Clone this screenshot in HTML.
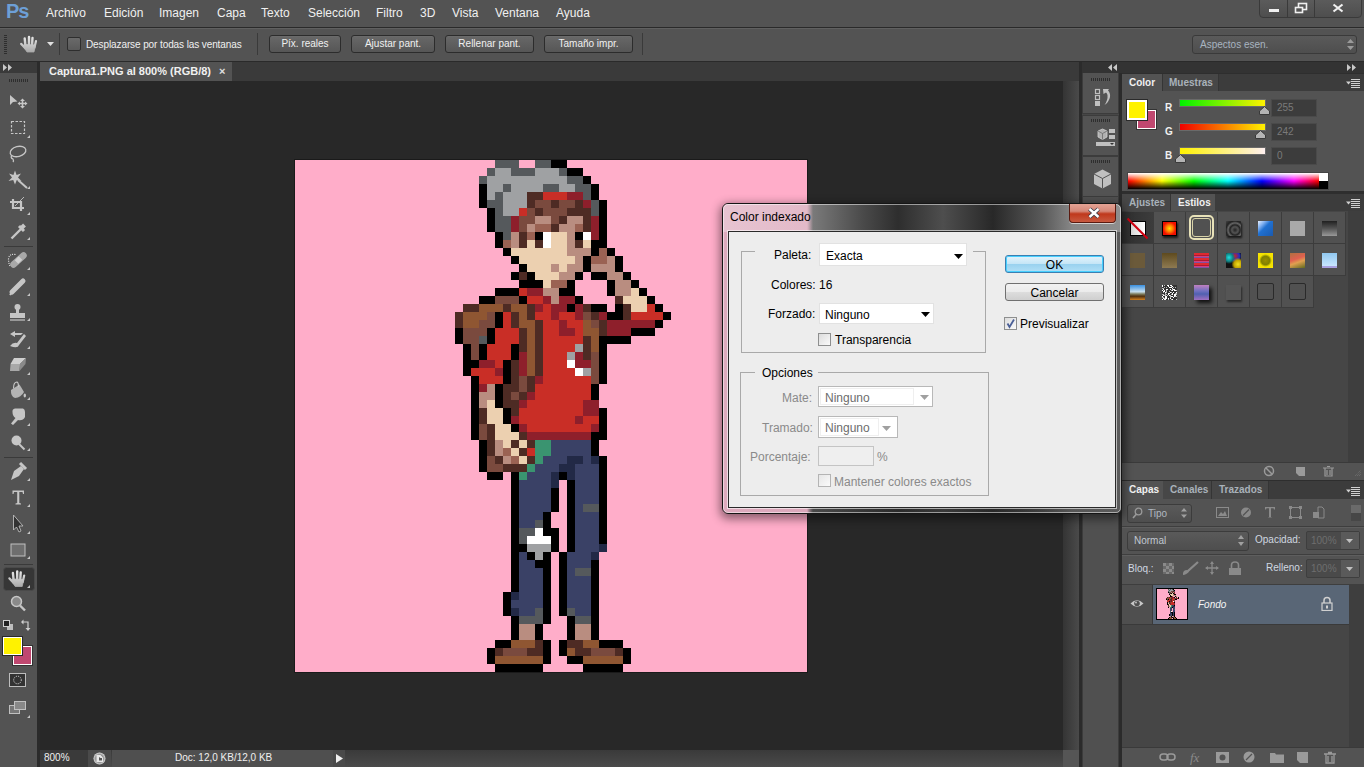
<!DOCTYPE html>
<html><head><meta charset="utf-8">
<style>
*{margin:0;padding:0;box-sizing:border-box}
html,body{width:1364px;height:767px;overflow:hidden;background:#535353;font-family:"Liberation Sans",sans-serif;color:#e8e8e8}
.a{position:absolute}
.t{position:absolute;white-space:nowrap;line-height:1}
.menu{font-size:12px;color:#f0f0f0;top:7px}
.dl{font-size:12px;color:#000}
.dis{color:#8a8a8a}
.dis2{color:#6d6d6d}
.btn{position:absolute;top:35px;height:18px;border:1px solid #2c2c2c;border-radius:3px;background:linear-gradient(#686868,#565656);font-size:10px;color:#f0f0f0;text-align:center;line-height:16px;box-shadow:inset 0 1px 0 #6a6a6a}
</style></head><body>
<!-- menu bar -->
<div class="a" style="left:0;top:0;width:1364px;height:27px;background:#535353"></div>
<div class="t" style="left:6px;top:1px;font-size:20px;font-weight:bold;color:#6d9fd6;letter-spacing:-1.2px">Ps</div>
<div class="t menu" style="left:46px">Archivo</div>
<div class="t menu" style="left:104px">Edición</div>
<div class="t menu" style="left:159px">Imagen</div>
<div class="t menu" style="left:217px">Capa</div>
<div class="t menu" style="left:261px">Texto</div>
<div class="t menu" style="left:308px">Selección</div>
<div class="t menu" style="left:376px">Filtro</div>
<div class="t menu" style="left:420px">3D</div>
<div class="t menu" style="left:452px">Vista</div>
<div class="t menu" style="left:495px">Ventana</div>
<div class="t menu" style="left:556px">Ayuda</div>
<!-- window controls -->
<div class="a" style="left:1259px;top:-2px;width:103px;height:20px;border:1px solid #3a3a3a;border-radius:0 0 4px 4px;background:linear-gradient(#5c5c5c,#4e4e4e)"></div>
<div class="a" style="left:1287px;top:0;width:1px;height:17px;background:#3a3a3a"></div>
<div class="a" style="left:1314px;top:0;width:1px;height:17px;background:#3a3a3a"></div>
<div class="a" style="left:1269px;top:9px;width:10px;height:3px;background:#f0f0f0"></div>
<svg class="a" style="left:1294px;top:2px" width="14" height="12"><rect x="4.5" y="1.5" width="8" height="6" fill="none" stroke="#f0f0f0" stroke-width="1.6"/><rect x="1" y="5" width="8" height="6" fill="#535353"/><rect x="1.5" y="5.5" width="7" height="5" fill="none" stroke="#f0f0f0" stroke-width="1.6"/></svg>
<svg class="a" style="left:1332px;top:3px" width="12" height="10"><path d="M1.5 1.5 L10.5 8.5 M10.5 1.5 L1.5 8.5" stroke="#f0f0f0" stroke-width="2.2"/></svg>
<div class="a" style="left:0;top:27px;width:1364px;height:1px;background:#2a2a2a"></div>
<div class="a" style="left:0;top:28px;width:1364px;height:1px;background:#606060"></div>
<!-- options bar -->
<div class="a" style="left:4px;top:35px;width:3px;height:20px;background:repeating-linear-gradient(#2e2e2e 0 1px,transparent 1px 2px)"></div>
<svg class="a" style="left:20px;top:35px" width="19" height="18"><g transform="translate(0.5 0.5)"><defs><linearGradient id="hg0" gradientUnits="userSpaceOnUse" x1="0" y1="1" x2="0" y2="17"><stop offset="0" stop-color="#e8e8e8"/><stop offset="1" stop-color="#a8a8a8"/></linearGradient></defs>
<g fill="url(#hg0)" stroke="url(#hg0)" stroke-linecap="round">
<path d="M4.2 3 L5 11" stroke-width="2.4"/><path d="M8.5 1.5 L8.5 10" stroke-width="2.4"/><path d="M12 2.5 L11.5 10.5" stroke-width="2.4"/><path d="M15.5 5.5 L14 12" stroke-width="2.2"/>
<path d="M0.8 8.5 L5 13" stroke-width="2.4"/>
<path d="M4 9 L15 9.5 L13.5 16.5 L6.5 16.5 L3.5 12 Z" stroke-width="0.8"/>
</g></g></svg>
<svg class="a" style="left:47px;top:42px" width="7" height="4"><path d="M0 0 L7 0 L3.5 4 Z" fill="#e0e0e0"/></svg>
<div class="a" style="left:59px;top:33px;width:1px;height:22px;background:#3a3a3a"></div>
<div class="a" style="left:67px;top:37px;width:14px;height:14px;border:1px solid #2e2e2e;border-radius:2px;background:linear-gradient(#6a6a6a,#5a5a5a)"></div>
<div class="t" style="left:86px;top:40px;font-size:10px;letter-spacing:-0.1px;color:#f0f0f0">Desplazarse por todas las ventanas</div>
<div class="a" style="left:257px;top:33px;width:1px;height:22px;background:#3a3a3a"></div>
<div class="btn" style="left:269px;width:72px">Píx. reales</div>
<div class="btn" style="left:351px;width:84px">Ajustar pant.</div>
<div class="btn" style="left:445px;width:89px">Rellenar pant.</div>
<div class="btn" style="left:544px;width:89px">Tamaño impr.</div>
<div class="a" style="left:642px;top:33px;width:1px;height:22px;background:#3a3a3a"></div>
<div class="a" style="left:1192px;top:35px;width:165px;height:19px;border:1px solid #3a3a3a;border-radius:3px;background:linear-gradient(#5a5a5a,#4e4e4e)"></div>
<div class="t" style="left:1200px;top:40px;font-size:10px;color:#a8b4c0">Aspectos esen.</div>
<svg class="a" style="left:1347px;top:39px" width="7" height="11"><path d="M0 4 L3.5 0 L7 4 Z M0 7 L3.5 11 L7 7 Z" fill="#9a9a9a"/></svg>
<div class="a" style="left:0;top:61px;width:1364px;height:1px;background:#2a2a2a"></div>

<!-- left toolbar -->
<div class="a" style="left:0;top:62px;width:37px;height:11px;background:#3a3a3a"></div>
<svg class="a" style="left:3px;top:64px" width="10" height="7"><path d="M0 0 L4 3.5 L0 7 Z M5 0 L9 3.5 L5 7 Z" fill="#c8c8c8"/></svg>
<div class="a" style="left:37px;top:62px;width:3px;height:705px;background:#2b2b2b"></div>
<div class="a" style="left:9px;top:79px;width:19px;height:3px;background:repeating-linear-gradient(90deg,#2e2e2e 0 1px,transparent 1px 2px)"></div>

<svg class="a" style="left:0;top:0" width="37" height="767" viewBox="0 0 37 767">
<g fill="#c6c6c6" stroke="none">
<!-- move -->
<path d="M10 95 L17.5 101.5 L13 102 L10 105 Z"/>
<path d="M22.5 98.5 L25 101 L23.3 101 L23.3 102.7 L25 102.7 L25 101.5 L27.5 103.5 L25 105.5 L25 104.3 L23.3 104.3 L23.3 106 L25 106 L22.5 108.5 L20 106 L21.7 106 L21.7 104.3 L20 104.3 L20 105.5 L17.5 103.5 L20 101.5 L20 102.7 L21.7 102.7 L21.7 101 L20 101 Z"/>
<!-- triangles -->
<path d="M30 135 L30 138 L27 138 Z M30 186 L30 189 L27 189 Z M30 212 L30 215 L27 215 Z M30 237 L30 240 L27 240 Z M30 267 L30 270 L27 270 Z M30 293 L30 296 L27 296 Z M30 318 L30 321 L27 321 Z M30 346 L30 349 L27 349 Z M30 372 L30 375 L27 375 Z M30 397 L30 400 L27 400 Z M30 423 L30 426 L27 426 Z M30 448 L30 451 L27 451 Z M30 478 L30 481 L27 481 Z M30 504 L30 507 L27 507 Z M30 531 L30 534 L27 534 Z M30 556 L30 559 L27 559 Z M30 585 L30 588 L27 588 Z M30 715 L30 718 L27 718 Z"/>
<!-- wand star -->
<path d="M15 170.5 L16.6 175 L21 173.5 L18 177.5 L21.5 181 L16.8 180 L15 184.5 L13.2 180 L8.5 181 L12 177.5 L9 173.5 L13.4 175 Z"/>
</g>
<g fill="none" stroke="#c6c6c6">
<rect x="11.5" y="121.5" width="13" height="12" stroke-dasharray="2.5 1.5" stroke-width="1.2"/>
<ellipse cx="18" cy="151.5" rx="8" ry="5" transform="rotate(-15 18 151.5)" stroke-width="1.3"/>
<path d="M12 155 Q10 158 13 159 Q14 161 13 162" stroke-width="1.3"/>
<path d="M18 180 L27 188" stroke-width="2"/>
<path d="M10 202 L21 202 L21 211 M13 199 L13 208 L24 208" stroke-width="2.2"/>
<path d="M15 206 L24 197" stroke-width="0.9"/>
<path d="M11.5 238.5 L21 229" stroke-width="2.4"/>
<path d="M19 226 L24 231" stroke-width="3"/>
<path d="M21.5 228 L24.5 225" stroke-width="4"/>
<path d="M13.5 264.5 L23.5 255.5" stroke-width="6.5" stroke-linecap="round" stroke="#a8a8a8"/>
<path d="M16.5 262 L20.5 258" stroke-width="5" stroke="#cfcfcf"/>
<path d="M15.5 254.5 Q9 253.5 8.5 259 Q8.5 263 10 266" stroke-width="1.2" stroke-dasharray="1 1.2" stroke="#e0e0e0"/>
<path d="M12 292 L23 281" stroke-width="5" stroke-linecap="round"/>
<path d="M10 295 L14 289" stroke-width="2"/>
<path d="M10 320 L25 320" stroke-width="1.2"/>
<path d="M10.5 356 L10.5 371" stroke-width="0"/>
</g>
<g fill="#c6c6c6">
<circle cx="17.5" cy="307" r="3"/><rect x="16" y="308" width="3" height="6"/><rect x="10" y="313" width="15" height="5"/>
<path d="M10 346 Q13 342 17 343 L24 334 L26 336 L19 345 Q18 349 10 346 Z"/>
<path d="M10 334 L15 331 L15 333 L23 333 L21 335 L15 335 L15 337 Z"/>
<path d="M14 358 L26 358 L20 364 L10.5 364 Z" fill="#cfcfcf"/><path d="M10.5 364 L20 364 L19.5 371 L10 371 Z" fill="#a8a8a8"/><path d="M20 364 L26 358 L25.5 364 L19.5 371 Z" fill="#8a8a8a"/>
<path d="M11 390 L19.5 384.5 L24 392 Q21 397.5 15 398 Q10.5 396.5 11 390 Z" fill="#b4b4b4"/>
<ellipse cx="24.8" cy="395.5" rx="1.2" ry="2" fill="#c6c6c6"/>
<path d="M13.5 388.5 Q13.5 382 17 382 Q18.5 382.5 18.5 387" fill="none" stroke="#c6c6c6" stroke-width="1.2"/>
<path d="M12.5 412 Q12 409 15 408.5 L23 408.5 Q25 409 25 412 L25 417 Q23 421 18 420 L13 425 L11 423.5 L15.5 418 Q12.5 416 12.5 412 Z"/>
<circle cx="16.5" cy="440.5" r="5"/>
<path d="M19 444 L24.5 449.5" stroke="#c6c6c6" stroke-width="2" fill="none"/>
<path d="M11 480 L14 471 L21 466 L24 469 L19 476 Z"/>
<path d="M20 463 L26 469" stroke="#c6c6c6" stroke-width="3" fill="none"/>
<path d="M12.5 490.5 L24 490.5 L24 494 L23 494 L22.5 492 L19.3 492 L19.3 503 L21 503.5 L21 504.5 L15.5 504.5 L15.5 503.5 L17.2 503 L17.2 492 L14 492 L13.5 494 L12.5 494 Z"/>
<rect x="11" y="544" width="14" height="12" fill="#6e6e6e" stroke="#c0c0c0" stroke-width="1"/>
</g>
<path d="M13.5 515 L13.5 530 L16.5 527 L19 532 L21 531 L19 526 L23 526 Z" fill="#333" stroke="#bbb" stroke-width="0.9"/>
<rect x="3.5" y="567.5" width="31" height="23" rx="3" fill="#363636" stroke="#4a4a4a"/>
<path d="M30 585 L30 588 L27 588 Z" fill="#c6c6c6"/>
<g transform="translate(8.7 570)"><defs><linearGradient id="hg570" gradientUnits="userSpaceOnUse" x1="0" y1="1" x2="0" y2="17"><stop offset="0" stop-color="#e8e8e8"/><stop offset="1" stop-color="#a8a8a8"/></linearGradient></defs>
<g fill="url(#hg570)" stroke="url(#hg570)" stroke-linecap="round">
<path d="M4.2 3 L5 11" stroke-width="2.4"/><path d="M8.5 1.5 L8.5 10" stroke-width="2.4"/><path d="M12 2.5 L11.5 10.5" stroke-width="2.4"/><path d="M15.5 5.5 L14 12" stroke-width="2.2"/>
<path d="M0.8 8.5 L5 13" stroke-width="2.4"/>
<path d="M4 9 L15 9.5 L13.5 16.5 L6.5 16.5 L3.5 12 Z" stroke-width="0.8"/>
</g></g>
<circle cx="16.5" cy="601.5" r="5" fill="#8a8a8a" stroke="#c6c6c6" stroke-width="1.5"/>
<path d="M20 605.5 L25 610.5" stroke="#c6c6c6" stroke-width="2.4"/>
<rect x="7" y="624" width="6" height="6" fill="#bdbdbd"/><rect x="3.5" y="620.5" width="6" height="6" fill="#222" stroke="#cfcfcf"/>
<path d="M23 622 L28 622 L28 628" fill="none" stroke="#cfcfcf" stroke-width="1.2"/>
<path d="M21 622 L23.5 619.5 L23.5 624.5 Z M28 631 L25.5 628 L30.5 628 Z" fill="#cfcfcf"/>
<rect x="13.5" y="646.5" width="18" height="18" fill="#c04870" stroke="#fff"/>
<rect x="12.5" y="645.5" width="20" height="20" fill="none" stroke="#333"/>
<rect x="3.5" y="637.5" width="18" height="17" fill="#fff200" stroke="#fff"/>
<rect x="2.5" y="636.5" width="20" height="19" fill="none" stroke="#2a2a2a"/>
<rect x="9.5" y="673.5" width="16" height="13" fill="#333" stroke="#bdbdbd"/>
<circle cx="17.5" cy="680" r="3.8" fill="none" stroke="#e0e0e0" stroke-dasharray="1 1"/>
<rect x="9.5" y="705.5" width="10" height="8" fill="#777" stroke="#c0c0c0"/>
<rect x="14.5" y="701.5" width="11" height="8" fill="#888" stroke="#c0c0c0"/>
</svg>
<div class="a" style="left:4px;top:246px;width:29px;height:1px;background:#3a3a3a"></div>
<div class="a" style="left:4px;top:457px;width:29px;height:1px;background:#3a3a3a"></div>
<div class="a" style="left:4px;top:564px;width:29px;height:1px;background:#3a3a3a"></div>
<!-- doc tab strip -->
<div class="a" style="left:40px;top:62px;width:1039px;height:19px;background:#3a3a3a"></div>
<div class="a" style="left:40px;top:62px;width:192px;height:19px;background:#535353"></div>
<div class="t" style="left:49px;top:66px;font-size:11px;font-weight:bold;color:#f0f0f0">Captura1.PNG al 800% (RGB/8)</div>
<div class="t" style="left:219px;top:66px;font-size:11px;font-weight:bold;color:#e0e0e0">×</div>

<!-- canvas area -->
<div class="a" style="left:40px;top:81px;width:1023px;height:669px;background:#282828"></div>
<div class="a" style="left:294px;top:159px;width:514px;height:514px;background:#1a1a1a"></div>
<svg class="a" style="left:295px;top:160px" width="512" height="512" viewBox="0 0 64 64" shape-rendering="crispEdges"><rect width="64" height="64" fill="#FFADC9"/><g id="art"><rect x="25" y="0" width="3" height="1" fill="#55595C"/><rect x="30" y="0" width="2" height="1" fill="#55595C"/><rect x="32" y="0" width="2" height="1" fill="#000000"/><rect x="24" y="1" width="1" height="1" fill="#55595C"/><rect x="25" y="1" width="2" height="1" fill="#9FA1A3"/><rect x="27" y="1" width="3" height="1" fill="#55595C"/><rect x="30" y="1" width="3" height="1" fill="#9FA1A3"/><rect x="33" y="1" width="1" height="1" fill="#55595C"/><rect x="34" y="1" width="2" height="1" fill="#000000"/><rect x="23" y="2" width="1" height="1" fill="#55595C"/><rect x="24" y="2" width="10" height="1" fill="#9FA1A3"/><rect x="34" y="2" width="2" height="1" fill="#55595C"/><rect x="36" y="2" width="1" height="1" fill="#000000"/><rect x="23" y="3" width="1" height="1" fill="#000000"/><rect x="24" y="3" width="2" height="1" fill="#9FA1A3"/><rect x="26" y="3" width="1" height="1" fill="#55595C"/><rect x="27" y="3" width="4" height="1" fill="#9FA1A3"/><rect x="31" y="3" width="2" height="1" fill="#55595C"/><rect x="33" y="3" width="2" height="1" fill="#9FA1A3"/><rect x="35" y="3" width="2" height="1" fill="#55595C"/><rect x="37" y="3" width="1" height="1" fill="#000000"/><rect x="23" y="4" width="1" height="1" fill="#000000"/><rect x="24" y="4" width="1" height="1" fill="#9FA1A3"/><rect x="25" y="4" width="1" height="1" fill="#55595C"/><rect x="26" y="4" width="3" height="1" fill="#9FA1A3"/><rect x="29" y="4" width="2" height="1" fill="#4E2B24"/><rect x="31" y="4" width="3" height="1" fill="#C92E26"/><rect x="34" y="4" width="2" height="1" fill="#8E1F2B"/><rect x="36" y="4" width="1" height="1" fill="#55595C"/><rect x="37" y="4" width="1" height="1" fill="#000000"/><rect x="23" y="5" width="1" height="1" fill="#000000"/><rect x="24" y="5" width="2" height="1" fill="#55595C"/><rect x="26" y="5" width="3" height="1" fill="#9FA1A3"/><rect x="29" y="5" width="1" height="1" fill="#4E2B24"/><rect x="30" y="5" width="2" height="1" fill="#7A4A3E"/><rect x="32" y="5" width="1" height="1" fill="#4E2B24"/><rect x="33" y="5" width="2" height="1" fill="#7A4A3E"/><rect x="35" y="5" width="1" height="1" fill="#4E2B24"/><rect x="36" y="5" width="1" height="1" fill="#8E1F2B"/><rect x="37" y="5" width="1" height="1" fill="#55595C"/><rect x="38" y="5" width="1" height="1" fill="#000000"/><rect x="24" y="6" width="1" height="1" fill="#000000"/><rect x="25" y="6" width="1" height="1" fill="#55595C"/><rect x="26" y="6" width="2" height="1" fill="#9FA1A3"/><rect x="28" y="6" width="1" height="1" fill="#C92E26"/><rect x="29" y="6" width="1" height="1" fill="#7A4A3E"/><rect x="30" y="6" width="1" height="1" fill="#4E2B24"/><rect x="31" y="6" width="3" height="1" fill="#7A4A3E"/><rect x="34" y="6" width="3" height="1" fill="#4E2B24"/><rect x="37" y="6" width="1" height="1" fill="#55595C"/><rect x="38" y="6" width="1" height="1" fill="#000000"/><rect x="24" y="7" width="1" height="1" fill="#000000"/><rect x="25" y="7" width="2" height="1" fill="#55595C"/><rect x="27" y="7" width="1" height="1" fill="#8E1F2B"/><rect x="28" y="7" width="2" height="1" fill="#7A4A3E"/><rect x="30" y="7" width="2" height="1" fill="#B98D80"/><rect x="32" y="7" width="1" height="1" fill="#7A4A3E"/><rect x="33" y="7" width="1" height="1" fill="#4E2B24"/><rect x="34" y="7" width="2" height="1" fill="#B98D80"/><rect x="36" y="7" width="1" height="1" fill="#4E2B24"/><rect x="37" y="7" width="1" height="1" fill="#8E1F2B"/><rect x="38" y="7" width="1" height="1" fill="#000000"/><rect x="24" y="8" width="1" height="1" fill="#000000"/><rect x="25" y="8" width="2" height="1" fill="#55595C"/><rect x="27" y="8" width="1" height="1" fill="#8E1F2B"/><rect x="28" y="8" width="1" height="1" fill="#7A4A3E"/><rect x="29" y="8" width="1" height="1" fill="#B98D80"/><rect x="30" y="8" width="2" height="1" fill="#9A6253"/><rect x="32" y="8" width="1" height="1" fill="#4E2B24"/><rect x="33" y="8" width="2" height="1" fill="#B98D80"/><rect x="35" y="8" width="1" height="1" fill="#9A6253"/><rect x="36" y="8" width="1" height="1" fill="#4E2B24"/><rect x="37" y="8" width="1" height="1" fill="#8E1F2B"/><rect x="38" y="8" width="1" height="1" fill="#000000"/><rect x="25" y="9" width="1" height="1" fill="#000000"/><rect x="26" y="9" width="1" height="1" fill="#55595C"/><rect x="27" y="9" width="1" height="1" fill="#B98D80"/><rect x="28" y="9" width="1" height="1" fill="#4E2B24"/><rect x="29" y="9" width="1" height="1" fill="#9A6253"/><rect x="30" y="9" width="1" height="1" fill="#000000"/><rect x="31" y="9" width="1" height="1" fill="#FFFFFF"/><rect x="32" y="9" width="2" height="1" fill="#ECD0B0"/><rect x="34" y="9" width="1" height="1" fill="#B98D80"/><rect x="35" y="9" width="1" height="1" fill="#000000"/><rect x="36" y="9" width="1" height="1" fill="#FFFFFF"/><rect x="37" y="9" width="1" height="1" fill="#8E1F2B"/><rect x="38" y="9" width="1" height="1" fill="#000000"/><rect x="25" y="10" width="1" height="1" fill="#000000"/><rect x="26" y="10" width="1" height="1" fill="#9A6253"/><rect x="27" y="10" width="1" height="1" fill="#B98D80"/><rect x="28" y="10" width="1" height="1" fill="#4E2B24"/><rect x="29" y="10" width="1" height="1" fill="#ECD0B0"/><rect x="30" y="10" width="1" height="1" fill="#4E2B24"/><rect x="31" y="10" width="1" height="1" fill="#FFFFFF"/><rect x="32" y="10" width="2" height="1" fill="#ECD0B0"/><rect x="34" y="10" width="1" height="1" fill="#B98D80"/><rect x="35" y="10" width="1" height="1" fill="#4E2B24"/><rect x="36" y="10" width="1" height="1" fill="#ECD0B0"/><rect x="37" y="10" width="2" height="1" fill="#000000"/><rect x="26" y="11" width="1" height="1" fill="#000000"/><rect x="27" y="11" width="7" height="1" fill="#ECD0B0"/><rect x="34" y="11" width="3" height="1" fill="#B98D80"/><rect x="37" y="11" width="1" height="1" fill="#000000"/><rect x="38" y="11" width="1" height="1" fill="#9A6253"/><rect x="39" y="11" width="1" height="1" fill="#000000"/><rect x="27" y="12" width="1" height="1" fill="#000000"/><rect x="28" y="12" width="7" height="1" fill="#ECD0B0"/><rect x="35" y="12" width="1" height="1" fill="#B98D80"/><rect x="36" y="12" width="1" height="1" fill="#000000"/><rect x="37" y="12" width="2" height="1" fill="#9A6253"/><rect x="39" y="12" width="1" height="1" fill="#B98D80"/><rect x="40" y="12" width="1" height="1" fill="#000000"/><rect x="28" y="13" width="1" height="1" fill="#000000"/><rect x="29" y="13" width="3" height="1" fill="#ECD0B0"/><rect x="32" y="13" width="1" height="1" fill="#B98D80"/><rect x="33" y="13" width="1" height="1" fill="#ECD0B0"/><rect x="34" y="13" width="2" height="1" fill="#B98D80"/><rect x="36" y="13" width="1" height="1" fill="#000000"/><rect x="37" y="13" width="3" height="1" fill="#B98D80"/><rect x="40" y="13" width="1" height="1" fill="#000000"/><rect x="27" y="14" width="1" height="1" fill="#000000"/><rect x="28" y="14" width="1" height="1" fill="#4E2B24"/><rect x="29" y="14" width="1" height="1" fill="#000000"/><rect x="30" y="14" width="3" height="1" fill="#ECD0B0"/><rect x="33" y="14" width="2" height="1" fill="#B98D80"/><rect x="35" y="14" width="1" height="1" fill="#000000"/><rect x="37" y="14" width="2" height="1" fill="#000000"/><rect x="39" y="14" width="2" height="1" fill="#B98D80"/><rect x="41" y="14" width="1" height="1" fill="#000000"/><rect x="28" y="15" width="3" height="1" fill="#000000"/><rect x="31" y="15" width="1" height="1" fill="#ECD0B0"/><rect x="32" y="15" width="2" height="1" fill="#9A6253"/><rect x="34" y="15" width="1" height="1" fill="#000000"/><rect x="39" y="15" width="1" height="1" fill="#000000"/><rect x="40" y="15" width="2" height="1" fill="#B98D80"/><rect x="42" y="15" width="1" height="1" fill="#000000"/><rect x="25" y="16" width="3" height="1" fill="#000000"/><rect x="28" y="16" width="1" height="1" fill="#C92E26"/><rect x="29" y="16" width="2" height="1" fill="#8E1F2B"/><rect x="31" y="16" width="2" height="1" fill="#B98D80"/><rect x="33" y="16" width="2" height="1" fill="#000000"/><rect x="39" y="16" width="1" height="1" fill="#000000"/><rect x="40" y="16" width="2" height="1" fill="#B98D80"/><rect x="42" y="16" width="1" height="1" fill="#ECD0B0"/><rect x="43" y="16" width="1" height="1" fill="#000000"/><rect x="23" y="17" width="2" height="1" fill="#000000"/><rect x="25" y="17" width="3" height="1" fill="#7A4A3E"/><rect x="28" y="17" width="1" height="1" fill="#000000"/><rect x="29" y="17" width="2" height="1" fill="#C92E26"/><rect x="31" y="17" width="1" height="1" fill="#8E1F2B"/><rect x="32" y="17" width="1" height="1" fill="#B98D80"/><rect x="33" y="17" width="2" height="1" fill="#8E1F2B"/><rect x="35" y="17" width="1" height="1" fill="#000000"/><rect x="40" y="17" width="1" height="1" fill="#4E2B24"/><rect x="41" y="17" width="3" height="1" fill="#ECD0B0"/><rect x="44" y="17" width="1" height="1" fill="#000000"/><rect x="21" y="18" width="2" height="1" fill="#4E2B24"/><rect x="23" y="18" width="3" height="1" fill="#8F5632"/><rect x="26" y="18" width="1" height="1" fill="#4E2B24"/><rect x="27" y="18" width="2" height="1" fill="#8F5632"/><rect x="29" y="18" width="1" height="1" fill="#4E2B24"/><rect x="30" y="18" width="1" height="1" fill="#8E1F2B"/><rect x="31" y="18" width="1" height="1" fill="#C92E26"/><rect x="32" y="18" width="2" height="1" fill="#8E1F2B"/><rect x="34" y="18" width="1" height="1" fill="#000000"/><rect x="35" y="18" width="1" height="1" fill="#8E1F2B"/><rect x="36" y="18" width="1" height="1" fill="#4E2B24"/><rect x="37" y="18" width="2" height="1" fill="#000000"/><rect x="40" y="18" width="1" height="1" fill="#000000"/><rect x="41" y="18" width="1" height="1" fill="#4E2B24"/><rect x="42" y="18" width="2" height="1" fill="#ECD0B0"/><rect x="44" y="18" width="1" height="1" fill="#C92E26"/><rect x="45" y="18" width="1" height="1" fill="#000000"/><rect x="20" y="19" width="1" height="1" fill="#4E2B24"/><rect x="21" y="19" width="3" height="1" fill="#8F5632"/><rect x="24" y="19" width="1" height="1" fill="#7A4A3E"/><rect x="25" y="19" width="1" height="1" fill="#000000"/><rect x="26" y="19" width="1" height="1" fill="#C92E26"/><rect x="27" y="19" width="1" height="1" fill="#4E2B24"/><rect x="28" y="19" width="1" height="1" fill="#8F5632"/><rect x="29" y="19" width="1" height="1" fill="#4E2B24"/><rect x="30" y="19" width="2" height="1" fill="#C92E26"/><rect x="32" y="19" width="1" height="1" fill="#8E1F2B"/><rect x="33" y="19" width="2" height="1" fill="#C92E26"/><rect x="35" y="19" width="1" height="1" fill="#8E1F2B"/><rect x="36" y="19" width="1" height="1" fill="#7A4A3E"/><rect x="37" y="19" width="1" height="1" fill="#4E2B24"/><rect x="38" y="19" width="1" height="1" fill="#8E1F2B"/><rect x="39" y="19" width="2" height="1" fill="#000000"/><rect x="41" y="19" width="1" height="1" fill="#4E2B24"/><rect x="42" y="19" width="4" height="1" fill="#C92E26"/><rect x="46" y="19" width="1" height="1" fill="#000000"/><rect x="20" y="20" width="1" height="1" fill="#4E2B24"/><rect x="21" y="20" width="2" height="1" fill="#8F5632"/><rect x="23" y="20" width="2" height="1" fill="#7A4A3E"/><rect x="25" y="20" width="1" height="1" fill="#000000"/><rect x="26" y="20" width="1" height="1" fill="#C92E26"/><rect x="27" y="20" width="1" height="1" fill="#4E2B24"/><rect x="28" y="20" width="2" height="1" fill="#8F5632"/><rect x="30" y="20" width="1" height="1" fill="#4E2B24"/><rect x="31" y="20" width="2" height="1" fill="#C92E26"/><rect x="33" y="20" width="1" height="1" fill="#8E1F2B"/><rect x="34" y="20" width="2" height="1" fill="#C92E26"/><rect x="36" y="20" width="1" height="1" fill="#8F5632"/><rect x="37" y="20" width="1" height="1" fill="#7A4A3E"/><rect x="38" y="20" width="1" height="1" fill="#4E2B24"/><rect x="39" y="20" width="6" height="1" fill="#8E1F2B"/><rect x="45" y="20" width="1" height="1" fill="#000000"/><rect x="20" y="21" width="1" height="1" fill="#000000"/><rect x="21" y="21" width="3" height="1" fill="#7A4A3E"/><rect x="24" y="21" width="1" height="1" fill="#000000"/><rect x="25" y="21" width="3" height="1" fill="#C92E26"/><rect x="28" y="21" width="1" height="1" fill="#4E2B24"/><rect x="29" y="21" width="1" height="1" fill="#8F5632"/><rect x="30" y="21" width="1" height="1" fill="#4E2B24"/><rect x="31" y="21" width="2" height="1" fill="#C92E26"/><rect x="33" y="21" width="2" height="1" fill="#8E1F2B"/><rect x="35" y="21" width="1" height="1" fill="#C92E26"/><rect x="36" y="21" width="2" height="1" fill="#8F5632"/><rect x="38" y="21" width="1" height="1" fill="#4E2B24"/><rect x="39" y="21" width="3" height="1" fill="#8E1F2B"/><rect x="42" y="21" width="3" height="1" fill="#000000"/><rect x="20" y="22" width="1" height="1" fill="#000000"/><rect x="21" y="22" width="2" height="1" fill="#7A4A3E"/><rect x="23" y="22" width="1" height="1" fill="#55595C"/><rect x="24" y="22" width="1" height="1" fill="#000000"/><rect x="25" y="22" width="3" height="1" fill="#C92E26"/><rect x="28" y="22" width="1" height="1" fill="#4E2B24"/><rect x="29" y="22" width="1" height="1" fill="#8F5632"/><rect x="30" y="22" width="1" height="1" fill="#4E2B24"/><rect x="31" y="22" width="5" height="1" fill="#C92E26"/><rect x="36" y="22" width="1" height="1" fill="#4E2B24"/><rect x="37" y="22" width="1" height="1" fill="#8F5632"/><rect x="38" y="22" width="4" height="1" fill="#000000"/><rect x="21" y="23" width="1" height="1" fill="#000000"/><rect x="22" y="23" width="1" height="1" fill="#7A4A3E"/><rect x="23" y="23" width="1" height="1" fill="#000000"/><rect x="24" y="23" width="3" height="1" fill="#C92E26"/><rect x="27" y="23" width="1" height="1" fill="#000000"/><rect x="28" y="23" width="1" height="1" fill="#4E2B24"/><rect x="29" y="23" width="1" height="1" fill="#8F5632"/><rect x="30" y="23" width="1" height="1" fill="#4E2B24"/><rect x="31" y="23" width="4" height="1" fill="#C92E26"/><rect x="35" y="23" width="1" height="1" fill="#9FA1A3"/><rect x="36" y="23" width="1" height="1" fill="#4E2B24"/><rect x="37" y="23" width="1" height="1" fill="#8F5632"/><rect x="38" y="23" width="1" height="1" fill="#000000"/><rect x="21" y="24" width="1" height="1" fill="#000000"/><rect x="22" y="24" width="1" height="1" fill="#7A4A3E"/><rect x="23" y="24" width="1" height="1" fill="#000000"/><rect x="24" y="24" width="3" height="1" fill="#C92E26"/><rect x="27" y="24" width="1" height="1" fill="#000000"/><rect x="28" y="24" width="1" height="1" fill="#8E1F2B"/><rect x="29" y="24" width="1" height="1" fill="#8F5632"/><rect x="30" y="24" width="1" height="1" fill="#4E2B24"/><rect x="31" y="24" width="3" height="1" fill="#C92E26"/><rect x="34" y="24" width="1" height="1" fill="#9FA1A3"/><rect x="35" y="24" width="1" height="1" fill="#8E1F2B"/><rect x="36" y="24" width="1" height="1" fill="#4E2B24"/><rect x="37" y="24" width="1" height="1" fill="#7A4A3E"/><rect x="38" y="24" width="1" height="1" fill="#000000"/><rect x="21" y="25" width="2" height="1" fill="#000000"/><rect x="23" y="25" width="2" height="1" fill="#8E1F2B"/><rect x="25" y="25" width="1" height="1" fill="#C92E26"/><rect x="26" y="25" width="1" height="1" fill="#000000"/><rect x="27" y="25" width="1" height="1" fill="#4E2B24"/><rect x="28" y="25" width="1" height="1" fill="#8E1F2B"/><rect x="29" y="25" width="1" height="1" fill="#8F5632"/><rect x="30" y="25" width="1" height="1" fill="#4E2B24"/><rect x="31" y="25" width="3" height="1" fill="#C92E26"/><rect x="34" y="25" width="1" height="1" fill="#FFFFFF"/><rect x="35" y="25" width="2" height="1" fill="#8E1F2B"/><rect x="37" y="25" width="1" height="1" fill="#7A4A3E"/><rect x="38" y="25" width="1" height="1" fill="#000000"/><rect x="21" y="26" width="1" height="1" fill="#000000"/><rect x="22" y="26" width="3" height="1" fill="#C92E26"/><rect x="25" y="26" width="1" height="1" fill="#8E1F2B"/><rect x="26" y="26" width="1" height="1" fill="#000000"/><rect x="27" y="26" width="1" height="1" fill="#4E2B24"/><rect x="28" y="26" width="1" height="1" fill="#8E1F2B"/><rect x="29" y="26" width="1" height="1" fill="#8F5632"/><rect x="30" y="26" width="1" height="1" fill="#4E2B24"/><rect x="31" y="26" width="4" height="1" fill="#C92E26"/><rect x="35" y="26" width="1" height="1" fill="#FFFFFF"/><rect x="36" y="26" width="1" height="1" fill="#9FA1A3"/><rect x="37" y="26" width="1" height="1" fill="#7A4A3E"/><rect x="38" y="26" width="1" height="1" fill="#000000"/><rect x="22" y="27" width="1" height="1" fill="#000000"/><rect x="23" y="27" width="3" height="1" fill="#C92E26"/><rect x="26" y="27" width="1" height="1" fill="#000000"/><rect x="27" y="27" width="1" height="1" fill="#4E2B24"/><rect x="28" y="27" width="1" height="1" fill="#7A4A3E"/><rect x="29" y="27" width="1" height="1" fill="#4E2B24"/><rect x="30" y="27" width="1" height="1" fill="#8E1F2B"/><rect x="31" y="27" width="6" height="1" fill="#C92E26"/><rect x="37" y="27" width="1" height="1" fill="#7A4A3E"/><rect x="38" y="27" width="1" height="1" fill="#000000"/><rect x="22" y="28" width="1" height="1" fill="#000000"/><rect x="23" y="28" width="1" height="1" fill="#8E1F2B"/><rect x="24" y="28" width="1" height="1" fill="#B98D80"/><rect x="25" y="28" width="1" height="1" fill="#000000"/><rect x="26" y="28" width="2" height="1" fill="#4E2B24"/><rect x="28" y="28" width="1" height="1" fill="#7A4A3E"/><rect x="29" y="28" width="1" height="1" fill="#4E2B24"/><rect x="30" y="28" width="7" height="1" fill="#C92E26"/><rect x="37" y="28" width="1" height="1" fill="#000000"/><rect x="22" y="29" width="1" height="1" fill="#000000"/><rect x="23" y="29" width="2" height="1" fill="#B98D80"/><rect x="25" y="29" width="1" height="1" fill="#000000"/><rect x="26" y="29" width="1" height="1" fill="#4E2B24"/><rect x="27" y="29" width="1" height="1" fill="#7A4A3E"/><rect x="28" y="29" width="1" height="1" fill="#4E2B24"/><rect x="29" y="29" width="1" height="1" fill="#8E1F2B"/><rect x="30" y="29" width="7" height="1" fill="#C92E26"/><rect x="37" y="29" width="1" height="1" fill="#000000"/><rect x="22" y="30" width="1" height="1" fill="#000000"/><rect x="23" y="30" width="1" height="1" fill="#B98D80"/><rect x="24" y="30" width="1" height="1" fill="#ECD0B0"/><rect x="25" y="30" width="1" height="1" fill="#000000"/><rect x="26" y="30" width="2" height="1" fill="#4E2B24"/><rect x="28" y="30" width="1" height="1" fill="#8E1F2B"/><rect x="29" y="30" width="7" height="1" fill="#C92E26"/><rect x="36" y="30" width="2" height="1" fill="#8E1F2B"/><rect x="22" y="31" width="1" height="1" fill="#000000"/><rect x="23" y="31" width="1" height="1" fill="#4E2B24"/><rect x="24" y="31" width="2" height="1" fill="#ECD0B0"/><rect x="26" y="31" width="1" height="1" fill="#000000"/><rect x="27" y="31" width="1" height="1" fill="#4E2B24"/><rect x="28" y="31" width="8" height="1" fill="#C92E26"/><rect x="36" y="31" width="2" height="1" fill="#8E1F2B"/><rect x="38" y="31" width="1" height="1" fill="#000000"/><rect x="22" y="32" width="1" height="1" fill="#000000"/><rect x="23" y="32" width="1" height="1" fill="#4E2B24"/><rect x="24" y="32" width="2" height="1" fill="#ECD0B0"/><rect x="26" y="32" width="1" height="1" fill="#000000"/><rect x="27" y="32" width="1" height="1" fill="#8E1F2B"/><rect x="28" y="32" width="7" height="1" fill="#C92E26"/><rect x="35" y="32" width="1" height="1" fill="#8E1F2B"/><rect x="36" y="32" width="2" height="1" fill="#C92E26"/><rect x="38" y="32" width="1" height="1" fill="#000000"/><rect x="22" y="33" width="1" height="1" fill="#000000"/><rect x="23" y="33" width="1" height="1" fill="#7A4A3E"/><rect x="24" y="33" width="1" height="1" fill="#4E2B24"/><rect x="25" y="33" width="2" height="1" fill="#ECD0B0"/><rect x="27" y="33" width="1" height="1" fill="#000000"/><rect x="28" y="33" width="1" height="1" fill="#8E1F2B"/><rect x="29" y="33" width="8" height="1" fill="#C92E26"/><rect x="37" y="33" width="1" height="1" fill="#8E1F2B"/><rect x="38" y="33" width="1" height="1" fill="#000000"/><rect x="22" y="34" width="1" height="1" fill="#000000"/><rect x="23" y="34" width="1" height="1" fill="#7A4A3E"/><rect x="24" y="34" width="1" height="1" fill="#4E2B24"/><rect x="25" y="34" width="3" height="1" fill="#ECD0B0"/><rect x="28" y="34" width="1" height="1" fill="#4E2B24"/><rect x="29" y="34" width="8" height="1" fill="#8E1F2B"/><rect x="37" y="34" width="2" height="1" fill="#000000"/><rect x="23" y="35" width="1" height="1" fill="#000000"/><rect x="24" y="35" width="1" height="1" fill="#4E2B24"/><rect x="25" y="35" width="1" height="1" fill="#B98D80"/><rect x="26" y="35" width="1" height="1" fill="#ECD0B0"/><rect x="27" y="35" width="1" height="1" fill="#4E2B24"/><rect x="28" y="35" width="1" height="1" fill="#ECD0B0"/><rect x="29" y="35" width="1" height="1" fill="#4E2B24"/><rect x="30" y="35" width="2" height="1" fill="#3A9470"/><rect x="32" y="35" width="5" height="1" fill="#3A4166"/><rect x="37" y="35" width="1" height="1" fill="#000000"/><rect x="23" y="36" width="1" height="1" fill="#000000"/><rect x="24" y="36" width="1" height="1" fill="#4E2B24"/><rect x="25" y="36" width="1" height="1" fill="#B98D80"/><rect x="26" y="36" width="1" height="1" fill="#9A6253"/><rect x="27" y="36" width="1" height="1" fill="#ECD0B0"/><rect x="28" y="36" width="1" height="1" fill="#4E2B24"/><rect x="29" y="36" width="1" height="1" fill="#C92E26"/><rect x="30" y="36" width="2" height="1" fill="#3A9470"/><rect x="32" y="36" width="5" height="1" fill="#3A4166"/><rect x="37" y="36" width="1" height="1" fill="#000000"/><rect x="23" y="37" width="1" height="1" fill="#000000"/><rect x="24" y="37" width="1" height="1" fill="#7A4A3E"/><rect x="25" y="37" width="1" height="1" fill="#4E2B24"/><rect x="26" y="37" width="1" height="1" fill="#B98D80"/><rect x="27" y="37" width="1" height="1" fill="#9A6253"/><rect x="28" y="37" width="1" height="1" fill="#ECD0B0"/><rect x="29" y="37" width="1" height="1" fill="#4E2B24"/><rect x="30" y="37" width="1" height="1" fill="#3A9470"/><rect x="31" y="37" width="3" height="1" fill="#3A4166"/><rect x="34" y="37" width="2" height="1" fill="#222946"/><rect x="36" y="37" width="1" height="1" fill="#3A4166"/><rect x="37" y="37" width="1" height="1" fill="#222946"/><rect x="38" y="37" width="1" height="1" fill="#000000"/><rect x="23" y="38" width="1" height="1" fill="#000000"/><rect x="24" y="38" width="2" height="1" fill="#7A4A3E"/><rect x="26" y="38" width="3" height="1" fill="#4E2B24"/><rect x="29" y="38" width="1" height="1" fill="#3A9470"/><rect x="30" y="38" width="3" height="1" fill="#3A4166"/><rect x="33" y="38" width="2" height="1" fill="#222946"/><rect x="35" y="38" width="3" height="1" fill="#3A4166"/><rect x="38" y="38" width="1" height="1" fill="#000000"/><rect x="24" y="39" width="2" height="1" fill="#000000"/><rect x="27" y="39" width="1" height="1" fill="#000000"/><rect x="28" y="39" width="1" height="1" fill="#3A9470"/><rect x="29" y="39" width="3" height="1" fill="#3A4166"/><rect x="32" y="39" width="1" height="1" fill="#222946"/><rect x="33" y="39" width="1" height="1" fill="#000000"/><rect x="34" y="39" width="1" height="1" fill="#222946"/><rect x="35" y="39" width="3" height="1" fill="#3A4166"/><rect x="38" y="39" width="1" height="1" fill="#000000"/><rect x="27" y="40" width="1" height="1" fill="#000000"/><rect x="28" y="40" width="4" height="1" fill="#3A4166"/><rect x="32" y="40" width="1" height="1" fill="#222946"/><rect x="34" y="40" width="1" height="1" fill="#000000"/><rect x="35" y="40" width="3" height="1" fill="#3A4166"/><rect x="38" y="40" width="1" height="1" fill="#000000"/><rect x="27" y="41" width="1" height="1" fill="#000000"/><rect x="28" y="41" width="4" height="1" fill="#3A4166"/><rect x="32" y="41" width="1" height="1" fill="#000000"/><rect x="34" y="41" width="1" height="1" fill="#000000"/><rect x="35" y="41" width="3" height="1" fill="#3A4166"/><rect x="38" y="41" width="1" height="1" fill="#000000"/><rect x="27" y="42" width="1" height="1" fill="#000000"/><rect x="28" y="42" width="4" height="1" fill="#3A4166"/><rect x="32" y="42" width="1" height="1" fill="#000000"/><rect x="34" y="42" width="1" height="1" fill="#000000"/><rect x="35" y="42" width="3" height="1" fill="#3A4166"/><rect x="38" y="42" width="1" height="1" fill="#000000"/><rect x="27" y="43" width="1" height="1" fill="#000000"/><rect x="28" y="43" width="4" height="1" fill="#3A4166"/><rect x="32" y="43" width="1" height="1" fill="#000000"/><rect x="34" y="43" width="1" height="1" fill="#000000"/><rect x="35" y="43" width="1" height="1" fill="#3A4166"/><rect x="36" y="43" width="2" height="1" fill="#55595C"/><rect x="38" y="43" width="1" height="1" fill="#000000"/><rect x="27" y="44" width="1" height="1" fill="#000000"/><rect x="28" y="44" width="3" height="1" fill="#3A4166"/><rect x="31" y="44" width="1" height="1" fill="#000000"/><rect x="34" y="44" width="1" height="1" fill="#000000"/><rect x="35" y="44" width="3" height="1" fill="#3A4166"/><rect x="38" y="44" width="1" height="1" fill="#000000"/><rect x="27" y="45" width="1" height="1" fill="#000000"/><rect x="28" y="45" width="2" height="1" fill="#3A4166"/><rect x="30" y="45" width="1" height="1" fill="#55595C"/><rect x="31" y="45" width="1" height="1" fill="#000000"/><rect x="34" y="45" width="1" height="1" fill="#000000"/><rect x="35" y="45" width="3" height="1" fill="#3A4166"/><rect x="38" y="45" width="1" height="1" fill="#000000"/><rect x="27" y="46" width="1" height="1" fill="#000000"/><rect x="28" y="46" width="2" height="1" fill="#55595C"/><rect x="30" y="46" width="1" height="1" fill="#FFFFFF"/><rect x="31" y="46" width="2" height="1" fill="#000000"/><rect x="34" y="46" width="1" height="1" fill="#000000"/><rect x="35" y="46" width="3" height="1" fill="#3A4166"/><rect x="38" y="46" width="1" height="1" fill="#000000"/><rect x="27" y="47" width="1" height="1" fill="#000000"/><rect x="28" y="47" width="1" height="1" fill="#55595C"/><rect x="29" y="47" width="3" height="1" fill="#FFFFFF"/><rect x="32" y="47" width="1" height="1" fill="#000000"/><rect x="34" y="47" width="1" height="1" fill="#000000"/><rect x="35" y="47" width="3" height="1" fill="#3A4166"/><rect x="38" y="47" width="1" height="1" fill="#000000"/><rect x="27" y="48" width="2" height="1" fill="#000000"/><rect x="29" y="48" width="3" height="1" fill="#9FA1A3"/><rect x="32" y="48" width="1" height="1" fill="#000000"/><rect x="34" y="48" width="1" height="1" fill="#000000"/><rect x="35" y="48" width="3" height="1" fill="#3A4166"/><rect x="38" y="48" width="1" height="1" fill="#222946"/><rect x="27" y="49" width="1" height="1" fill="#000000"/><rect x="28" y="49" width="1" height="1" fill="#3A4166"/><rect x="29" y="49" width="1" height="1" fill="#000000"/><rect x="30" y="49" width="1" height="1" fill="#9FA1A3"/><rect x="31" y="49" width="1" height="1" fill="#000000"/><rect x="33" y="49" width="1" height="1" fill="#000000"/><rect x="34" y="49" width="3" height="1" fill="#3A4166"/><rect x="37" y="49" width="1" height="1" fill="#222946"/><rect x="27" y="50" width="1" height="1" fill="#000000"/><rect x="28" y="50" width="2" height="1" fill="#3A4166"/><rect x="30" y="50" width="2" height="1" fill="#000000"/><rect x="33" y="50" width="1" height="1" fill="#000000"/><rect x="34" y="50" width="3" height="1" fill="#3A4166"/><rect x="37" y="50" width="1" height="1" fill="#000000"/><rect x="27" y="51" width="1" height="1" fill="#000000"/><rect x="28" y="51" width="3" height="1" fill="#3A4166"/><rect x="31" y="51" width="1" height="1" fill="#000000"/><rect x="33" y="51" width="1" height="1" fill="#000000"/><rect x="34" y="51" width="1" height="1" fill="#3A4166"/><rect x="35" y="51" width="2" height="1" fill="#55595C"/><rect x="37" y="51" width="1" height="1" fill="#000000"/><rect x="27" y="52" width="1" height="1" fill="#000000"/><rect x="28" y="52" width="3" height="1" fill="#3A4166"/><rect x="31" y="52" width="1" height="1" fill="#000000"/><rect x="33" y="52" width="1" height="1" fill="#000000"/><rect x="34" y="52" width="3" height="1" fill="#3A4166"/><rect x="37" y="52" width="1" height="1" fill="#000000"/><rect x="27" y="53" width="1" height="1" fill="#000000"/><rect x="28" y="53" width="3" height="1" fill="#3A4166"/><rect x="31" y="53" width="1" height="1" fill="#000000"/><rect x="33" y="53" width="1" height="1" fill="#000000"/><rect x="34" y="53" width="3" height="1" fill="#3A4166"/><rect x="37" y="53" width="1" height="1" fill="#000000"/><rect x="26" y="54" width="1" height="1" fill="#000000"/><rect x="27" y="54" width="1" height="1" fill="#222946"/><rect x="28" y="54" width="3" height="1" fill="#3A4166"/><rect x="31" y="54" width="1" height="1" fill="#000000"/><rect x="33" y="54" width="1" height="1" fill="#000000"/><rect x="34" y="54" width="3" height="1" fill="#3A4166"/><rect x="37" y="54" width="1" height="1" fill="#000000"/><rect x="26" y="55" width="1" height="1" fill="#000000"/><rect x="27" y="55" width="4" height="1" fill="#3A4166"/><rect x="31" y="55" width="1" height="1" fill="#000000"/><rect x="33" y="55" width="1" height="1" fill="#000000"/><rect x="34" y="55" width="3" height="1" fill="#3A4166"/><rect x="37" y="55" width="1" height="1" fill="#000000"/><rect x="26" y="56" width="1" height="1" fill="#000000"/><rect x="27" y="56" width="1" height="1" fill="#222946"/><rect x="28" y="56" width="2" height="1" fill="#3A4166"/><rect x="30" y="56" width="1" height="1" fill="#55595C"/><rect x="31" y="56" width="1" height="1" fill="#000000"/><rect x="33" y="56" width="1" height="1" fill="#000000"/><rect x="34" y="56" width="1" height="1" fill="#55595C"/><rect x="35" y="56" width="2" height="1" fill="#3A4166"/><rect x="37" y="56" width="1" height="1" fill="#000000"/><rect x="27" y="57" width="1" height="1" fill="#000000"/><rect x="28" y="57" width="3" height="1" fill="#55595C"/><rect x="31" y="57" width="1" height="1" fill="#000000"/><rect x="34" y="57" width="1" height="1" fill="#000000"/><rect x="35" y="57" width="2" height="1" fill="#55595C"/><rect x="37" y="57" width="1" height="1" fill="#000000"/><rect x="27" y="58" width="1" height="1" fill="#000000"/><rect x="28" y="58" width="2" height="1" fill="#B98D80"/><rect x="30" y="58" width="1" height="1" fill="#000000"/><rect x="34" y="58" width="1" height="1" fill="#000000"/><rect x="35" y="58" width="2" height="1" fill="#B98D80"/><rect x="37" y="58" width="1" height="1" fill="#000000"/><rect x="27" y="59" width="1" height="1" fill="#000000"/><rect x="28" y="59" width="2" height="1" fill="#B98D80"/><rect x="30" y="59" width="1" height="1" fill="#000000"/><rect x="34" y="59" width="1" height="1" fill="#000000"/><rect x="35" y="59" width="2" height="1" fill="#B98D80"/><rect x="37" y="59" width="1" height="1" fill="#000000"/><rect x="25" y="60" width="2" height="1" fill="#000000"/><rect x="27" y="60" width="3" height="1" fill="#8F5632"/><rect x="30" y="60" width="1" height="1" fill="#4E2B24"/><rect x="31" y="60" width="1" height="1" fill="#000000"/><rect x="33" y="60" width="1" height="1" fill="#000000"/><rect x="34" y="60" width="2" height="1" fill="#4E2B24"/><rect x="36" y="60" width="2" height="1" fill="#8F5632"/><rect x="38" y="60" width="3" height="1" fill="#000000"/><rect x="24" y="61" width="1" height="1" fill="#000000"/><rect x="25" y="61" width="1" height="1" fill="#4E2B24"/><rect x="26" y="61" width="3" height="1" fill="#7A4A3E"/><rect x="29" y="61" width="2" height="1" fill="#4E2B24"/><rect x="31" y="61" width="1" height="1" fill="#000000"/><rect x="33" y="61" width="1" height="1" fill="#000000"/><rect x="34" y="61" width="1" height="1" fill="#8F5632"/><rect x="35" y="61" width="2" height="1" fill="#4E2B24"/><rect x="37" y="61" width="3" height="1" fill="#7A4A3E"/><rect x="40" y="61" width="1" height="1" fill="#4E2B24"/><rect x="41" y="61" width="1" height="1" fill="#000000"/><rect x="24" y="62" width="1" height="1" fill="#000000"/><rect x="25" y="62" width="6" height="1" fill="#8F5632"/><rect x="31" y="62" width="1" height="1" fill="#000000"/><rect x="34" y="62" width="2" height="1" fill="#000000"/><rect x="36" y="62" width="5" height="1" fill="#8F5632"/><rect x="41" y="62" width="1" height="1" fill="#000000"/><rect x="25" y="63" width="6" height="1" fill="#000000"/><rect x="36" y="63" width="5" height="1" fill="#000000"/></g></svg>

<!-- vertical scrollbar -->
<div class="a" style="left:1063px;top:81px;width:16px;height:669px;background:linear-gradient(90deg,#343434,#4a4a4a)"></div>
<div class="a" style="left:1079px;top:62px;width:3px;height:705px;background:#2b2b2b"></div>

<!-- status bar -->
<div class="a" style="left:40px;top:750px;width:1023px;height:17px;background:linear-gradient(#3a3a3a,#4a4a4a)"></div>
<div class="a" style="left:40px;top:750px;width:48px;height:17px;background:#3a3a3a"></div>
<div class="t" style="left:44px;top:753px;font-size:10px;color:#f0f0f0">800%</div>
<div class="a" style="left:88px;top:750px;width:23px;height:17px;background:#4a4a4a"></div>
<svg class="a" style="left:93px;top:752px" width="13" height="13"><defs><radialGradient id="sg"><stop offset="0.6" stop-color="#8a8a8a"/><stop offset="1" stop-color="#d8d8d8"/></radialGradient></defs><circle cx="6.5" cy="6.5" r="6" fill="url(#sg)"/><path d="M3.5 3 L7.5 3 L10 5.5 L10 10 L3.5 10 Z" fill="#e8e8e8"/><path d="M6 5 L6 8.5 L9 8.5 L9 6 L7.5 6 Z" fill="#555"/></svg>
<div class="a" style="left:112px;top:750px;width:221px;height:17px;background:#4f4f4f"></div>
<div class="t" style="left:175px;top:753px;font-size:10px;color:#f0f0f0">Doc: 12,0 KB/12,0 KB</div>
<div class="a" style="left:333px;top:750px;width:12px;height:17px;background:#4a4a4a"></div>
<svg class="a" style="left:336px;top:754px" width="7" height="9"><path d="M0 0 L7 4.5 L0 9 Z" fill="#f0f0f0"/></svg>
<div class="a" style="left:1063px;top:750px;width:16px;height:17px;background:#555"></div>

<!-- dock column -->
<div class="a" style="left:1082px;top:62px;width:282px;height:11px;background:#333"></div>
<svg class="a" style="left:1108px;top:64px" width="9" height="7"><path d="M4 0 L0 3.5 L4 7 Z M9 0 L5 3.5 L9 7 Z" fill="#c8c8c8"/></svg>
<svg class="a" style="left:1347px;top:64px" width="9" height="7"><path d="M0 0 L4 3.5 L0 7 Z M5 0 L9 3.5 L5 7 Z" fill="#c8c8c8"/></svg>
<div class="a" style="left:1082px;top:73px;width:37px;height:694px;background:#474747"></div>
<div class="a" style="left:1082px;top:73px;width:37px;height:41px;background:#535353;border:1px solid #3c3c3c;border-top:none"></div>
<div class="a" style="left:1082px;top:115px;width:37px;height:41px;background:#535353;border:1px solid #3c3c3c"></div>
<div class="a" style="left:1082px;top:156px;width:37px;height:41px;background:#535353;border:1px solid #3c3c3c"></div>
<div class="a" style="left:1082px;top:197px;width:37px;height:570px;background:#505050;border-left:1px solid #3c3c3c;border-right:1px solid #3c3c3c"></div>
<div class="a" style="left:1091px;top:78px;width:19px;height:3px;background:repeating-linear-gradient(90deg,#2e2e2e 0 1px,transparent 1px 2px)"></div>
<div class="a" style="left:1091px;top:119px;width:19px;height:3px;background:repeating-linear-gradient(90deg,#2e2e2e 0 1px,transparent 1px 2px)"></div>
<div class="a" style="left:1091px;top:160px;width:19px;height:3px;background:repeating-linear-gradient(90deg,#2e2e2e 0 1px,transparent 1px 2px)"></div>
<svg class="a" style="left:1082px;top:73px" width="37" height="124">
<g fill="none" stroke="#c0c0c0" stroke-width="1.2"><rect x="13.5" y="16.5" width="4" height="4"/><rect x="13.5" y="22.5" width="4" height="4"/></g>
<rect x="13" y="28" width="5" height="5" fill="#c0c0c0"/>
<path d="M21 16 L27 16 L26 17.5 Q28.5 20 28 24 Q27 29 22.5 32 Q26 27 25.5 22 Q25 20 24 19.5 L21.5 21 Z" fill="#c0c0c0"/>
<path d="M16 58 L20.5 56 L25 58 L25 64 L20.5 66.5 L16 64 Z" fill="#b0b0b0" stroke="#d0d0d0" stroke-width="0.8"/>
<path d="M16 58 L20.5 60.5 L25 58 M20.5 60.5 L20.5 66.5" stroke="#6a6a6a" stroke-width="0.8" fill="none"/>
<rect x="27" y="56" width="6" height="4" fill="#c0c0c0"/><rect x="27" y="62" width="6" height="4" fill="#c0c0c0"/>
<rect x="14" y="69" width="19" height="4" fill="#c0c0c0"/><path d="M28 70 L32 70 L30 72 Z" fill="#333"/>
<path d="M12 101 L20.5 96.5 L29 101 L29 111 L20.5 115.5 L12 111 Z" fill="#c0c0c0"/>
<path d="M12 101 L20.5 105.5 L29 101 M20.5 105.5 L20.5 115.5" stroke="#535353" stroke-width="1" fill="none"/>
</svg>
<div class="a" style="left:1119px;top:73px;width:3px;height:694px;background:#2b2b2b"></div>

<!-- right panels -->
<div class="a" style="left:1122px;top:73px;width:242px;height:694px;background:#2e2e2e"></div>
<!-- color panel -->
<div class="a" style="left:1122px;top:74px;width:242px;height:17px;background:#3c3c3c"></div>
<div class="a" style="left:1122px;top:74px;width:40px;height:17px;background:#535353"></div>
<div class="a" style="left:1162px;top:74px;width:57px;height:17px;background:#474747;border-left:1px solid #353535;border-right:1px solid #353535"></div>
<div class="t" style="left:1129px;top:78px;font-size:10px;font-weight:bold;color:#f0f0f0">Color</div>
<div class="t" style="left:1169px;top:78px;font-size:10px;font-weight:bold;color:#a9b2ba">Muestras</div>
<svg class="a" style="left:1346px;top:79px" width="15" height="9"><path d="M0 2.5 L5 2.5 L2.5 5.5 Z" fill="#d0d0d0"/><path d="M5 0.5 L14 0.5 M5 2.5 L14 2.5 M5 4.5 L14 4.5 M5 6.5 L14 6.5 M5 8.5 L14 8.5" stroke="#d0d0d0" stroke-width="1"/></svg>
<div class="a" style="left:1122px;top:91px;width:242px;height:100px;background:#535353"></div>
<div class="a" style="left:1137px;top:110px;width:19px;height:19px;background:#c04870;border:1px solid #fff;box-shadow:0 0 0 1px #333"></div>
<div class="a" style="left:1127px;top:100px;width:20px;height:20px;background:#fff200;border:2px solid #fff;box-shadow:0 0 0 1px #2a2a2a"></div>
<div class="t" style="left:1165px;top:103px;font-size:10px;font-weight:bold;color:#f0f0f0">R</div>
<div class="t" style="left:1165px;top:127px;font-size:10px;font-weight:bold;color:#f0f0f0">G</div>
<div class="t" style="left:1165px;top:151px;font-size:10px;font-weight:bold;color:#f0f0f0">B</div>
<div class="a" style="left:1180px;top:100px;width:85px;height:6px;background:linear-gradient(90deg,#00f000,#fff200);box-shadow:0 0 0 1px #6a6a6a"></div>
<div class="a" style="left:1180px;top:124px;width:85px;height:6px;background:linear-gradient(90deg,#f00000,#fff200);box-shadow:0 0 0 1px #6a6a6a"></div>
<div class="a" style="left:1180px;top:148px;width:85px;height:6px;background:linear-gradient(90deg,#fff200,#fff0f0);box-shadow:0 0 0 1px #6a6a6a"></div>
<svg class="a" style="left:1259px;top:106px" width="11" height="9"><path d="M5.5 0.5 L10.5 5 L10.5 8.5 L0.5 8.5 L0.5 5 Z" fill="#b4b4b4" stroke="#3a3a3a"/></svg>
<svg class="a" style="left:1255px;top:130px" width="11" height="9"><path d="M5.5 0.5 L10.5 5 L10.5 8.5 L0.5 8.5 L0.5 5 Z" fill="#b4b4b4" stroke="#3a3a3a"/></svg>
<svg class="a" style="left:1175px;top:154px" width="11" height="9"><path d="M5.5 0.5 L10.5 5 L10.5 8.5 L0.5 8.5 L0.5 5 Z" fill="#b4b4b4" stroke="#3a3a3a"/></svg>
<div class="a" style="left:1271px;top:99px;width:46px;height:18px;background:#3c3c3c;border:1px solid #4a4a4a"></div>
<div class="a" style="left:1271px;top:123px;width:46px;height:18px;background:#3c3c3c;border:1px solid #4a4a4a"></div>
<div class="a" style="left:1271px;top:147px;width:46px;height:18px;background:#3c3c3c;border:1px solid #4a4a4a"></div>
<div class="t" style="left:1277px;top:103px;font-size:10px;color:#7a7a7a">255</div>
<div class="t" style="left:1277px;top:127px;font-size:10px;color:#7a7a7a">242</div>
<div class="t" style="left:1277px;top:151px;font-size:10px;color:#7a7a7a">0</div>
<div class="a" style="left:1128px;top:173px;width:200px;height:16px;box-shadow:0 0 0 1px #444;background:linear-gradient(rgba(255,255,255,1),rgba(255,255,255,0) 50%,rgba(0,0,0,0) 50%,rgba(0,0,0,1)),linear-gradient(90deg,#f00 0,#ff0 17%,#0f0 33%,#0ff 50%,#00f 67%,#f0f 83%,#f00 95%)"></div>
<div class="a" style="left:1319px;top:173px;width:9px;height:8px;background:#fff"></div>
<div class="a" style="left:1319px;top:181px;width:9px;height:8px;background:#000"></div>

<!-- estilos panel -->
<div class="a" style="left:1122px;top:194px;width:242px;height:17px;background:#3c3c3c"></div>
<div class="a" style="left:1122px;top:194px;width:49px;height:17px;background:#474747;border-right:1px solid #353535"></div>
<div class="a" style="left:1171px;top:194px;width:44px;height:17px;background:#535353"></div>
<div class="t" style="left:1129px;top:198px;font-size:10px;font-weight:bold;color:#a9b2ba">Ajustes</div>
<div class="t" style="left:1178px;top:198px;font-size:10px;font-weight:bold;color:#f0f0f0">Estilos</div>
<svg class="a" style="left:1346px;top:199px" width="15" height="9"><path d="M0 2.5 L5 2.5 L2.5 5.5 Z" fill="#d0d0d0"/><path d="M5 0.5 L14 0.5 M5 2.5 L14 2.5 M5 4.5 L14 4.5 M5 6.5 L14 6.5 M5 8.5 L14 8.5" stroke="#d0d0d0" stroke-width="1"/></svg>
<div class="a" style="left:1122px;top:211px;width:242px;height:251px;background:#464646"></div>
<div class="a" style="left:1348px;top:211px;width:16px;height:251px;background:#3e3e3e"></div>
<div class="a" style="left:1122px;top:211px;width:10px;height:251px;background:linear-gradient(90deg,#3a3a3a,rgba(71,71,71,0))"></div>
<div class="a" style="left:1122px;top:212px;width:32px;height:32px;background:linear-gradient(90deg,#2e2e2e,#3c3c3c);border-right:1px solid #3c3c3c;border-bottom:1px solid #3c3c3c"></div><div class="a" style="left:1154px;top:212px;width:32px;height:32px;background:#515151;border-right:1px solid #3c3c3c;border-bottom:1px solid #3c3c3c"></div><div class="a" style="left:1186px;top:212px;width:32px;height:32px;background:#515151;border-right:1px solid #3c3c3c;border-bottom:1px solid #3c3c3c"></div><div class="a" style="left:1218px;top:212px;width:32px;height:32px;background:#515151;border-right:1px solid #3c3c3c;border-bottom:1px solid #3c3c3c"></div><div class="a" style="left:1250px;top:212px;width:32px;height:32px;background:#515151;border-right:1px solid #3c3c3c;border-bottom:1px solid #3c3c3c"></div><div class="a" style="left:1282px;top:212px;width:32px;height:32px;background:#515151;border-right:1px solid #3c3c3c;border-bottom:1px solid #3c3c3c"></div><div class="a" style="left:1314px;top:212px;width:32px;height:32px;background:#515151;border-right:1px solid #3c3c3c;border-bottom:1px solid #3c3c3c"></div><div class="a" style="left:1122px;top:244px;width:32px;height:32px;background:#515151;border-right:1px solid #3c3c3c;border-bottom:1px solid #3c3c3c"></div><div class="a" style="left:1154px;top:244px;width:32px;height:32px;background:#515151;border-right:1px solid #3c3c3c;border-bottom:1px solid #3c3c3c"></div><div class="a" style="left:1186px;top:244px;width:32px;height:32px;background:#515151;border-right:1px solid #3c3c3c;border-bottom:1px solid #3c3c3c"></div><div class="a" style="left:1218px;top:244px;width:32px;height:32px;background:#515151;border-right:1px solid #3c3c3c;border-bottom:1px solid #3c3c3c"></div><div class="a" style="left:1250px;top:244px;width:32px;height:32px;background:#515151;border-right:1px solid #3c3c3c;border-bottom:1px solid #3c3c3c"></div><div class="a" style="left:1282px;top:244px;width:32px;height:32px;background:#515151;border-right:1px solid #3c3c3c;border-bottom:1px solid #3c3c3c"></div><div class="a" style="left:1314px;top:244px;width:32px;height:32px;background:#515151;border-right:1px solid #3c3c3c;border-bottom:1px solid #3c3c3c"></div><div class="a" style="left:1122px;top:276px;width:32px;height:32px;background:#515151;border-right:1px solid #3c3c3c;border-bottom:1px solid #3c3c3c"></div><div class="a" style="left:1154px;top:276px;width:32px;height:32px;background:#515151;border-right:1px solid #3c3c3c;border-bottom:1px solid #3c3c3c"></div><div class="a" style="left:1186px;top:276px;width:32px;height:32px;background:#515151;border-right:1px solid #3c3c3c;border-bottom:1px solid #3c3c3c"></div><div class="a" style="left:1218px;top:276px;width:32px;height:32px;background:#515151;border-right:1px solid #3c3c3c;border-bottom:1px solid #3c3c3c"></div><div class="a" style="left:1250px;top:276px;width:32px;height:32px;background:#515151;border-right:1px solid #3c3c3c;border-bottom:1px solid #3c3c3c"></div><div class="a" style="left:1282px;top:276px;width:32px;height:32px;background:#515151;border-right:1px solid #3c3c3c;border-bottom:1px solid #3c3c3c"></div><div class="a" style="left:1162px;top:221px;width:15px;height:15px;background:radial-gradient(circle at 50% 50%,#ffe000 0,#ff8000 35%,#f01000 70%);border:1px solid #000;box-shadow:1px 2px 2px rgba(0,0,0,0.7)"></div><div class="a" style="left:1226px;top:221px;width:15px;height:15px;background:radial-gradient(circle at 60% 60%,#222 0,#555 25%,#222 40%,#666 55%,#222 70%,#444 100%);box-shadow:1px 2px 2px rgba(0,0,0,0.7)"></div><div class="a" style="left:1258px;top:221px;width:15px;height:15px;background:linear-gradient(135deg,#e8f0ff 0,#80b0f0 25%,#2070d0 45%,#1a5ab0 100%)"></div><div class="a" style="left:1290px;top:221px;width:15px;height:15px;background:#a9a9a9"></div><div class="a" style="left:1322px;top:221px;width:15px;height:15px;background:linear-gradient(180deg,#202020 0,#555 50%,#999 100%)"></div><div class="a" style="left:1130px;top:253px;width:15px;height:15px;background:#6b5a3a"></div><div class="a" style="left:1162px;top:253px;width:15px;height:15px;background:linear-gradient(#5e4a1e,#8e7a52)"></div><div class="a" style="left:1194px;top:253px;width:15px;height:15px;background:repeating-linear-gradient(#e02a30 0 2px,#b01830 2px 3px,#d04080 3px 4px,#8050a0 4px 5px)"></div><div class="a" style="left:1226px;top:253px;width:15px;height:15px;background:radial-gradient(circle at 80% 75%,#f0e020 0,#c0a000 25%,rgba(0,0,0,0) 40%),radial-gradient(circle at 20% 30%,#20e0e0 0,#108080 25%,rgba(0,0,0,0) 40%),radial-gradient(circle at 60% 20%,#d02020 0,#2030c0 30%,rgba(0,0,0,0) 45%),#111"></div><div class="a" style="left:1258px;top:253px;width:15px;height:15px;background:radial-gradient(#9a9000 0,#808000 40%,#f0e000 60%,#ffe800 100%)"></div><div class="a" style="left:1290px;top:253px;width:15px;height:15px;background:linear-gradient(160deg,#b07040 0,#e06050 40%,#e0a050 60%,#606a20 100%)"></div><div class="a" style="left:1322px;top:253px;width:15px;height:15px;background:linear-gradient(#90c8f0,#c8e6ff);border-bottom:2px solid #a8a0e0"></div><div class="a" style="left:1130px;top:285px;width:15px;height:15px;background:linear-gradient(#3a90e0 0,#c8e0f0 45%,#808060 60%,#503010 75%,#d08020 100%)"></div><div class="a" style="left:1194px;top:285px;width:15px;height:15px;background:linear-gradient(#c080c0 0,#7070c0 40%,#5060b0 60%,#a070c0 100%);box-shadow:3px 3px 4px rgba(0,0,0,0.8)"></div><div class="a" style="left:1226px;top:285px;width:15px;height:15px;background:#555;box-shadow:1px 2px 2px rgba(0,0,0,0.5)"></div><svg class="a" style="left:1162px;top:285px" width="15" height="15" shape-rendering="crispEdges"><rect width="15" height="15" fill="#333"/><rect x="0" y="0" width="1" height="1" fill="#fff"/><rect x="2" y="0" width="1" height="1" fill="#bbb"/><rect x="5" y="0" width="1" height="1" fill="#fff"/><rect x="6" y="0" width="1" height="1" fill="#fff"/><rect x="8" y="0" width="1" height="1" fill="#fff"/><rect x="9" y="0" width="1" height="1" fill="#fff"/><rect x="0" y="1" width="1" height="1" fill="#fff"/><rect x="6" y="1" width="1" height="1" fill="#fff"/><rect x="9" y="1" width="1" height="1" fill="#bbb"/><rect x="10" y="1" width="1" height="1" fill="#fff"/><rect x="2" y="2" width="1" height="1" fill="#bbb"/><rect x="4" y="2" width="1" height="1" fill="#bbb"/><rect x="7" y="2" width="1" height="1" fill="#fff"/><rect x="8" y="2" width="1" height="1" fill="#fff"/><rect x="9" y="2" width="1" height="1" fill="#fff"/><rect x="11" y="2" width="1" height="1" fill="#bbb"/><rect x="13" y="2" width="1" height="1" fill="#bbb"/><rect x="0" y="3" width="1" height="1" fill="#bbb"/><rect x="1" y="3" width="1" height="1" fill="#bbb"/><rect x="10" y="3" width="1" height="1" fill="#fff"/><rect x="1" y="4" width="1" height="1" fill="#fff"/><rect x="4" y="4" width="1" height="1" fill="#fff"/><rect x="5" y="4" width="1" height="1" fill="#fff"/><rect x="8" y="4" width="1" height="1" fill="#fff"/><rect x="10" y="4" width="1" height="1" fill="#bbb"/><rect x="11" y="4" width="1" height="1" fill="#fff"/><rect x="12" y="4" width="1" height="1" fill="#fff"/><rect x="0" y="5" width="1" height="1" fill="#fff"/><rect x="2" y="5" width="1" height="1" fill="#fff"/><rect x="4" y="5" width="1" height="1" fill="#bbb"/><rect x="9" y="5" width="1" height="1" fill="#bbb"/><rect x="10" y="5" width="1" height="1" fill="#fff"/><rect x="12" y="5" width="1" height="1" fill="#fff"/><rect x="13" y="5" width="1" height="1" fill="#fff"/><rect x="14" y="5" width="1" height="1" fill="#bbb"/><rect x="1" y="6" width="1" height="1" fill="#fff"/><rect x="2" y="6" width="1" height="1" fill="#fff"/><rect x="4" y="6" width="1" height="1" fill="#bbb"/><rect x="7" y="6" width="1" height="1" fill="#bbb"/><rect x="1" y="7" width="1" height="1" fill="#bbb"/><rect x="3" y="7" width="1" height="1" fill="#fff"/><rect x="4" y="7" width="1" height="1" fill="#bbb"/><rect x="8" y="7" width="1" height="1" fill="#fff"/><rect x="9" y="7" width="1" height="1" fill="#bbb"/><rect x="11" y="7" width="1" height="1" fill="#fff"/><rect x="14" y="7" width="1" height="1" fill="#fff"/><rect x="3" y="8" width="1" height="1" fill="#bbb"/><rect x="6" y="8" width="1" height="1" fill="#fff"/><rect x="7" y="8" width="1" height="1" fill="#fff"/><rect x="10" y="8" width="1" height="1" fill="#fff"/><rect x="13" y="8" width="1" height="1" fill="#bbb"/><rect x="14" y="8" width="1" height="1" fill="#bbb"/><rect x="0" y="9" width="1" height="1" fill="#bbb"/><rect x="1" y="9" width="1" height="1" fill="#bbb"/><rect x="3" y="9" width="1" height="1" fill="#bbb"/><rect x="4" y="9" width="1" height="1" fill="#bbb"/><rect x="6" y="9" width="1" height="1" fill="#fff"/><rect x="9" y="9" width="1" height="1" fill="#bbb"/><rect x="10" y="9" width="1" height="1" fill="#fff"/><rect x="12" y="9" width="1" height="1" fill="#fff"/><rect x="13" y="9" width="1" height="1" fill="#fff"/><rect x="14" y="9" width="1" height="1" fill="#bbb"/><rect x="1" y="10" width="1" height="1" fill="#fff"/><rect x="2" y="10" width="1" height="1" fill="#bbb"/><rect x="3" y="10" width="1" height="1" fill="#bbb"/><rect x="5" y="10" width="1" height="1" fill="#bbb"/><rect x="7" y="10" width="1" height="1" fill="#fff"/><rect x="8" y="10" width="1" height="1" fill="#bbb"/><rect x="12" y="10" width="1" height="1" fill="#fff"/><rect x="13" y="10" width="1" height="1" fill="#fff"/><rect x="0" y="11" width="1" height="1" fill="#fff"/><rect x="3" y="11" width="1" height="1" fill="#fff"/><rect x="4" y="11" width="1" height="1" fill="#fff"/><rect x="8" y="11" width="1" height="1" fill="#bbb"/><rect x="9" y="11" width="1" height="1" fill="#fff"/><rect x="10" y="11" width="1" height="1" fill="#fff"/><rect x="12" y="11" width="1" height="1" fill="#fff"/><rect x="13" y="11" width="1" height="1" fill="#bbb"/><rect x="14" y="11" width="1" height="1" fill="#bbb"/><rect x="0" y="12" width="1" height="1" fill="#bbb"/><rect x="1" y="12" width="1" height="1" fill="#bbb"/><rect x="3" y="12" width="1" height="1" fill="#fff"/><rect x="4" y="12" width="1" height="1" fill="#fff"/><rect x="8" y="12" width="1" height="1" fill="#bbb"/><rect x="11" y="12" width="1" height="1" fill="#fff"/><rect x="1" y="13" width="1" height="1" fill="#fff"/><rect x="2" y="13" width="1" height="1" fill="#bbb"/><rect x="3" y="13" width="1" height="1" fill="#fff"/><rect x="4" y="13" width="1" height="1" fill="#fff"/><rect x="6" y="13" width="1" height="1" fill="#fff"/><rect x="8" y="13" width="1" height="1" fill="#fff"/><rect x="0" y="14" width="1" height="1" fill="#fff"/><rect x="2" y="14" width="1" height="1" fill="#fff"/><rect x="3" y="14" width="1" height="1" fill="#fff"/><rect x="6" y="14" width="1" height="1" fill="#bbb"/><rect x="9" y="14" width="1" height="1" fill="#bbb"/><rect x="10" y="14" width="1" height="1" fill="#fff"/><rect x="14" y="14" width="1" height="1" fill="#bbb"/></svg><div class="a" style="left:1130px;top:221px;width:16px;height:15px;border:1.5px solid #000;background:linear-gradient(90deg,#d8d8d8,#fff)"></div><svg class="a" style="left:1126px;top:217px" width="24" height="24"><path d="M1.5 1.5 L21.5 21.5" stroke="#d00010" stroke-width="2.2"/></svg><div class="a" style="left:1189px;top:215px;width:25px;height:25px;border:2px solid #e8e2b8;border-radius:5px"></div><div class="a" style="left:1192px;top:218px;width:19px;height:19px;border:1px solid #d8d2a8;border-radius:3px"></div><div class="a" style="left:1257px;top:283px;width:17px;height:17px;border:1px solid #2a2a2a;border-radius:2px"></div><div class="a" style="left:1289px;top:283px;width:17px;height:17px;border:1px solid #2a2a2a;border-radius:2px"></div>
<div class="a" style="left:1122px;top:462px;width:242px;height:18px;background:#535353;border-top:1px solid #3a3a3a"></div>
<svg class="a" style="left:1263px;top:465px" width="100" height="13">
<circle cx="6" cy="6" r="4.5" fill="none" stroke="#9a9a9a" stroke-width="1.5"/><path d="M3 3 L9 9" stroke="#9a9a9a" stroke-width="1.5"/>
<path d="M33 2 L42 2 L42 11 L36 11 L33 8 Z" fill="#9a9a9a"/>
<path d="M60 3 L71 3 M62 3 L62 11 L69 11 L69 3 M64 5 L64 10 M67 5 L67 10 M64 1.5 L67 1.5" stroke="#9a9a9a" stroke-width="1.2" fill="none"/>
<path d="M94 11 L98 7 M96 11 L98 9 M92 11 L98 5" stroke="#7a7a7a" stroke-width="0.8" stroke-dasharray="1 1"/>
</svg>

<!-- capas panel -->
<div class="a" style="left:1122px;top:481px;width:242px;height:18px;background:#3c3c3c"></div>
<div class="a" style="left:1122px;top:481px;width:41px;height:18px;background:#535353"></div>
<div class="a" style="left:1163px;top:481px;width:49px;height:18px;background:#474747;border-right:1px solid #353535"></div>
<div class="a" style="left:1212px;top:481px;width:57px;height:18px;background:#474747;border-right:1px solid #353535"></div>
<div class="t" style="left:1129px;top:485px;font-size:10px;font-weight:bold;color:#f0f0f0">Capas</div>
<div class="t" style="left:1170px;top:485px;font-size:10px;font-weight:bold;color:#a9b2ba">Canales</div>
<div class="t" style="left:1219px;top:485px;font-size:10px;font-weight:bold;color:#a9b2ba">Trazados</div>
<svg class="a" style="left:1346px;top:487px" width="15" height="9"><path d="M0 2.5 L5 2.5 L2.5 5.5 Z" fill="#d0d0d0"/><path d="M5 0.5 L14 0.5 M5 2.5 L14 2.5 M5 4.5 L14 4.5 M5 6.5 L14 6.5 M5 8.5 L14 8.5" stroke="#d0d0d0" stroke-width="1"/></svg>
<div class="a" style="left:1122px;top:499px;width:242px;height:86px;background:#535353"></div>
<div class="a" style="left:1122px;top:526px;width:242px;height:1px;background:#3e3e3e"></div>
<div class="a" style="left:1122px;top:527px;width:242px;height:1px;background:#5e5e5e"></div>
<div class="a" style="left:1122px;top:554px;width:242px;height:1px;background:#3e3e3e"></div>
<div class="a" style="left:1122px;top:555px;width:242px;height:1px;background:#5e5e5e"></div>
<div class="a" style="left:1122px;top:584px;width:242px;height:1px;background:#3e3e3e"></div>
<div class="a" style="left:1127px;top:504px;width:65px;height:19px;border:1px solid #3c3c3c;border-radius:3px;background:linear-gradient(#5a5a5a,#4e4e4e)"></div>
<svg class="a" style="left:1132px;top:507px" width="11" height="12"><circle cx="6.5" cy="4.5" r="3.3" fill="none" stroke="#9a9a9a" stroke-width="1.3"/><path d="M4.5 7 L1 11" stroke="#9a9a9a" stroke-width="1.6"/></svg>
<div class="t" style="left:1148px;top:509px;font-size:10px;color:#b0b8c0">Tipo</div>
<svg class="a" style="left:1181px;top:508px" width="6" height="10"><path d="M0 3.5 L3 0 L6 3.5 Z M0 6.5 L3 10 L6 6.5 Z" fill="#a0a0a0"/></svg>
<svg class="a" style="left:1214px;top:505px" width="148" height="18">
<rect x="2.5" y="2.5" width="12" height="10" fill="none" stroke="#8a8a8a"/><path d="M4 11 L7 7 L9 9 L11 6 L13 11 Z" fill="#8a8a8a"/>
<circle cx="32" cy="7.5" r="5" fill="#8a8a8a"/><path d="M29 10.5 L35 4.5" stroke="#535353" stroke-width="1.2"/>
<path d="M51 2 L61 2 L61 4.5 L60 4.5 L59.5 3.3 L57 3.3 L57 12 L58.5 12.5 L53.5 12.5 L55 12 L55 3.3 L52.5 3.3 L52 4.5 L51 4.5 Z" fill="#8a8a8a"/>
<rect x="76.5" y="2.5" width="10" height="10" fill="none" stroke="#8a8a8a"/><rect x="75" y="1" width="3" height="3" fill="#8a8a8a"/><rect x="85" y="1" width="3" height="3" fill="#8a8a8a"/><rect x="75" y="11" width="3" height="3" fill="#8a8a8a"/><rect x="85" y="11" width="3" height="3" fill="#8a8a8a"/>
<path d="M104 2 L108 2 L110 4 L110 13 L104 13 Z" fill="none" stroke="#8a8a8a"/><rect x="99" y="7" width="6" height="6" fill="#8a8a8a"/>
<rect x="137" y="0" width="10" height="8" fill="#6a6a6a"/><rect x="137" y="8" width="10" height="8" fill="#474747"/>
</svg>
<div class="a" style="left:1127px;top:531px;width:122px;height:20px;border:1px solid #3c3c3c;border-radius:3px;background:linear-gradient(#5a5a5a,#4e4e4e)"></div>
<div class="t" style="left:1134px;top:536px;font-size:10px;color:#c0c8d0">Normal</div>
<svg class="a" style="left:1238px;top:535px" width="6" height="11"><path d="M0 4 L3 0 L6 4 Z M0 7 L3 11 L6 7 Z" fill="#a0a0a0"/></svg>
<div class="t" style="left:1255px;top:535px;font-size:10px;color:#d0d8e0">Opacidad:</div>
<div class="a" style="left:1306px;top:531px;width:54px;height:19px;border:1px solid #3e3e3e;border-radius:2px;background:#4a4a4a"></div>
<div class="a" style="left:1341px;top:532px;width:18px;height:17px;background:#5a5a5a"></div>
<div class="t" style="left:1311px;top:536px;font-size:10px;color:#6e6e6e">100%</div>
<svg class="a" style="left:1346px;top:539px" width="7" height="4"><path d="M0 0 L7 0 L3.5 4 Z" fill="#c0c0c0"/></svg>
<div class="t" style="left:1128px;top:564px;font-size:10px;color:#d0d8e0">Bloq.:</div>
<svg class="a" style="left:1162px;top:560px" width="80" height="16">
<g fill="#8a8a8a"><rect x="1" y="3" width="11" height="11" fill="#6a6a6a"/><rect x="1" y="3" width="3" height="3"/><rect x="7" y="3" width="3" height="3"/><rect x="4" y="6" width="3" height="3"/><rect x="10" y="6" width="2" height="3"/><rect x="1" y="9" width="3" height="3"/><rect x="7" y="9" width="3" height="3"/><rect x="4" y="12" width="3" height="2"/><rect x="10" y="12" width="2" height="2"/></g>
<path d="M21 14 Q24 14 26 11 L36 2" stroke="#8a8a8a" stroke-width="2.2" fill="none"/><path d="M21 14 Q21 10 25 10 L27 12 Z" fill="#8a8a8a"/>
<path d="M50 2 L50 14 M44 8 L56 8" stroke="#8a8a8a" stroke-width="1.3"/><path d="M50 1 L48 4 L52 4 Z M50 15 L48 12 L52 12 Z M43 8 L46 6 L46 10 Z M57 8 L54 6 L54 10 Z" fill="#8a8a8a"/>
<path d="M69.5 8 L69.5 5 Q69.5 2 73 2 Q76.5 2 76.5 5 L76.5 8" stroke="#8a8a8a" stroke-width="1.6" fill="none"/><rect x="67" y="8" width="12" height="7" fill="#8a8a8a"/>
</svg>
<div class="t" style="left:1266px;top:563px;font-size:10px;color:#d0d8e0">Relleno:</div>
<div class="a" style="left:1306px;top:559px;width:54px;height:19px;border:1px solid #3e3e3e;border-radius:2px;background:#4a4a4a"></div>
<div class="a" style="left:1341px;top:560px;width:18px;height:17px;background:#5a5a5a"></div>
<div class="t" style="left:1311px;top:564px;font-size:10px;color:#6e6e6e">100%</div>
<svg class="a" style="left:1346px;top:567px" width="7" height="4"><path d="M0 0 L7 0 L3.5 4 Z" fill="#c0c0c0"/></svg>
<!-- layer list -->
<div class="a" style="left:1122px;top:585px;width:227px;height:163px;background:#464646"></div>
<div class="a" style="left:1349px;top:585px;width:15px;height:163px;background:#3e3e3e"></div>
<div class="a" style="left:1122px;top:585px;width:31px;height:39px;background:#4f4f4f;border-right:1px solid #3a3a3a"></div>
<div class="a" style="left:1153px;top:585px;width:196px;height:39px;background:#596676"></div>
<div class="a" style="left:1122px;top:624px;width:227px;height:1px;background:#3a3a3a"></div>
<svg class="a" style="left:1130px;top:598px" width="14" height="11"><path d="M0.5 5.5 Q7 -1 13.5 5.5 Q7 12 0.5 5.5 Z" fill="#c8c8c8"/><circle cx="7" cy="5.5" r="2.8" fill="#4f4f4f"/><circle cx="6" cy="4.5" r="0.9" fill="#c8c8c8"/></svg>
<div class="a" style="left:1156px;top:588px;width:32px;height:32px;background:#000"></div>
<svg class="a" style="left:1157px;top:589px" width="30" height="30" viewBox="0 0 64 64" shape-rendering="crispEdges"><rect width="64" height="64" fill="#FFADC9"/><use href="#art"/></svg>
<div class="t" style="left:1198px;top:600px;font-size:10px;font-style:italic;color:#f4f4f4">Fondo</div>
<svg class="a" style="left:1321px;top:596px" width="12" height="15"><path d="M3 7 L3 4.5 Q3 1.5 6 1.5 Q9 1.5 9 4.5 L9 7" stroke="#d0d0d0" stroke-width="1.5" fill="none"/><rect x="1" y="7" width="10" height="7.5" fill="none" stroke="#d0d0d0" stroke-width="1.2"/><rect x="5" y="9.5" width="2" height="3" fill="#d0d0d0"/></svg>
<div class="a" style="left:1122px;top:747px;width:242px;height:20px;background:#535353;border-top:1px solid #3a3a3a"></div>
<svg class="a" style="left:1158px;top:750px" width="180" height="16">
<g stroke="#9a9a9a" fill="none" stroke-width="1.5"><rect x="2" y="4" width="8" height="6" rx="3"/><rect x="9" y="4" width="8" height="6" rx="3"/></g>
<text x="32" y="12" font-family="Liberation Serif" font-style="italic" font-size="13" fill="#8a8a8a">fx</text>
<rect x="58" y="2" width="13" height="11" fill="#9a9a9a"/><circle cx="64.5" cy="7.5" r="3" fill="#535353"/>
<circle cx="91" cy="7" r="5.5" fill="#9a9a9a"/><path d="M88 10 L94 4" stroke="#535353" stroke-width="1.3"/>
<path d="M112 3 L117 3 L118 4.5 L126 4.5 L126 13 L112 13 Z" fill="#9a9a9a"/>
<path d="M139 2 L150 2 L150 13 L142 13 L139 10 Z" fill="#9a9a9a"/>
<path d="M166 4 L178 4 M168 4 L168 13 L176 13 L176 4 M170 6 L170 12 M174 6 L174 12 M170 2.5 L174 2.5" stroke="#9a9a9a" stroke-width="1.3" fill="none"/>
</svg>
<!-- dialog -->
<div class="a" style="left:722px;top:203px;width:400px;height:311px;border-radius:6px;border:1px solid #151515;overflow:hidden;box-shadow:0 3px 10px 2px rgba(0,0,0,0.45);background:linear-gradient(90deg,#ddaabd 0,#dba8bb 84px,#7a7a7a 90px,#4a4a4a 140px,#2e2e2e 175px,#4e4e4e 220px,#282828 270px,#5a5a5a 320px,#888 350px,#8e8e8e 400px)"></div>
<div class="a" style="left:723px;top:204px;width:398px;height:28px;border-radius:5px 5px 0 0;background:linear-gradient(90deg,rgba(255,255,255,0.3) 0,rgba(255,255,255,0.2) 84px,rgba(255,255,255,0) 90px)"></div>
<div class="a" style="left:723px;top:232px;width:398px;height:281px;border-radius:0 0 5px 5px;background:linear-gradient(90deg,rgba(0,0,0,0) 0,rgba(0,0,0,0) 84px,rgba(40,40,40,0.6) 90px,rgba(40,40,40,0.5) 390px)"></div>
<div class="a" style="left:723px;top:204px;width:398px;height:309px;border-radius:5px;border:1px solid rgba(255,255,255,0.5)"></div>
<div class="t" style="left:730px;top:211px;font-size:12px;color:#000">Color indexado</div>
<div class="a" style="left:1069px;top:204px;width:47px;height:19px;border:1px solid #5a1a10;border-top:none;border-radius:0 0 4px 4px;background:linear-gradient(#e4a294 0,#d58878 40%,#c0381c 55%,#c85a40 100%);box-shadow:0 1px 0 rgba(255,255,255,0.6)"></div>
<svg class="a" style="left:1087px;top:207px" width="14" height="12"><path d="M2.5 2 L11.5 10 M11.5 2 L2.5 10" stroke="#333a4a" stroke-width="4"/><path d="M2.5 2 L11.5 10 M11.5 2 L2.5 10" stroke="#fff" stroke-width="2.4"/></svg>
<div class="a" style="left:728px;top:231px;width:388px;height:277px;border:1px solid #2a2a2a;background:#ededed;box-shadow:0 0 0 1px rgba(255,255,255,0.6)"></div>
<!-- group 1 -->
<div class="a" style="left:741px;top:251px;width:245px;height:102px;border:1px solid #a9a9a9;border-top:none"></div>
<div class="a" style="left:741px;top:251px;width:14px;height:1px;background:#a9a9a9"></div>
<div class="a" style="left:973px;top:251px;width:13px;height:1px;background:#a9a9a9"></div>
<div class="t dl" style="left:774px;top:249px">Paleta:</div>
<div class="a" style="left:819px;top:243px;width:148px;height:23px;background:#fff;border:1px solid #e2e2e2"></div>
<div class="t dl" style="left:826px;top:250px">Exacta</div>
<svg class="a" style="left:954px;top:254px" width="9" height="5"><path d="M0 0 L9 0 L4.5 5 Z" fill="#000"/></svg>
<div class="t dl" style="left:771px;top:279px">Colores: 16</div>
<div class="t dl" style="left:768px;top:308px">Forzado:</div>
<div class="a" style="left:819px;top:303px;width:115px;height:21px;background:#fff;border:1px solid #e2e2e2"></div>
<div class="t dl" style="left:825px;top:309px">Ninguno</div>
<svg class="a" style="left:921px;top:312px" width="9" height="5"><path d="M0 0 L9 0 L4.5 5 Z" fill="#000"/></svg>
<div class="a" style="left:818px;top:333px;width:13px;height:13px;border:1px solid #8e8f8f;background:linear-gradient(135deg,#dcdcdc,#fafafa)"></div>
<div class="t dl" style="left:835px;top:334px">Transparencia</div>
<!-- buttons -->
<div class="a" style="left:1005px;top:255px;width:99px;height:18px;border:1px solid #3c7fb1;border-radius:3px;background:linear-gradient(#e5f4fc 0,#c4e5f6 50%,#98d1ef 50%,#b2e0f6 100%);box-shadow:inset 0 0 0 1px #48d0ff"></div>
<div class="t dl" style="left:1005px;top:259px;width:99px;text-align:center">OK</div>
<div class="a" style="left:1005px;top:283px;width:99px;height:18px;border:1px solid #707070;border-radius:3px;background:linear-gradient(#f2f2f2 0,#ebebeb 50%,#dddddd 50%,#cfcfcf 100%)"></div>
<div class="t dl" style="left:1005px;top:287px;width:99px;text-align:center">Cancelar</div>
<div class="a" style="left:1004px;top:317px;width:13px;height:13px;border:1px solid #8e8f8f;background:linear-gradient(135deg,#dcdcdc,#fafafa)"></div>
<svg class="a" style="left:1005px;top:318px" width="11" height="11"><path d="M2.5 5.5 L4.5 9 L9 1.5" stroke="#4a5f97" stroke-width="1.8" fill="none"/></svg>
<div class="t dl" style="left:1020px;top:318px">Previsualizar</div>
<!-- group 2 -->
<div class="a" style="left:740px;top:372px;width:249px;height:124px;border:1px solid #a9a9a9;border-top:none"></div>
<div class="a" style="left:740px;top:372px;width:15px;height:1px;background:#a9a9a9"></div>
<div class="a" style="left:818px;top:372px;width:171px;height:1px;background:#a9a9a9"></div>
<div class="t dl" style="left:762px;top:367px">Opciones</div>
<div class="t dl dis" style="left:782px;top:392px">Mate:</div>
<div class="a" style="left:818px;top:386px;width:115px;height:21px;background:#fff;border:1px solid #b8b8b8"></div>
<div class="a" style="left:820px;top:388px;width:94px;height:17px;border:1px solid #efefef"></div>
<div class="t dl dis2" style="left:825px;top:392px">Ninguno</div>
<svg class="a" style="left:920px;top:395px" width="9" height="5"><path d="M0 0 L9 0 L4.5 5 Z" fill="#a0a0a0"/></svg>
<div class="t dl dis" style="left:762px;top:422px">Tramado:</div>
<div class="a" style="left:818px;top:416px;width:80px;height:22px;background:#fff;border:1px solid #b8b8b8"></div>
<div class="a" style="left:820px;top:418px;width:59px;height:18px;border:1px solid #efefef"></div>
<div class="t dl dis2" style="left:825px;top:422px">Ninguno</div>
<svg class="a" style="left:882px;top:426px" width="9" height="5"><path d="M0 0 L9 0 L4.5 5 Z" fill="#a0a0a0"/></svg>
<div class="t dl dis" style="left:750px;top:451px">Porcentaje:</div>
<div class="a" style="left:818px;top:446px;width:56px;height:20px;background:#efefef;border:1px solid #c4c4c4"></div>
<div class="t dl dis" style="left:877px;top:451px">%</div>
<div class="a" style="left:818px;top:474px;width:13px;height:13px;border:1px solid #b4b4b4;background:linear-gradient(135deg,#e6e6e6,#fafafa)"></div>
<div class="t dl dis" style="left:834px;top:476px">Mantener colores exactos</div>
</body></html>
